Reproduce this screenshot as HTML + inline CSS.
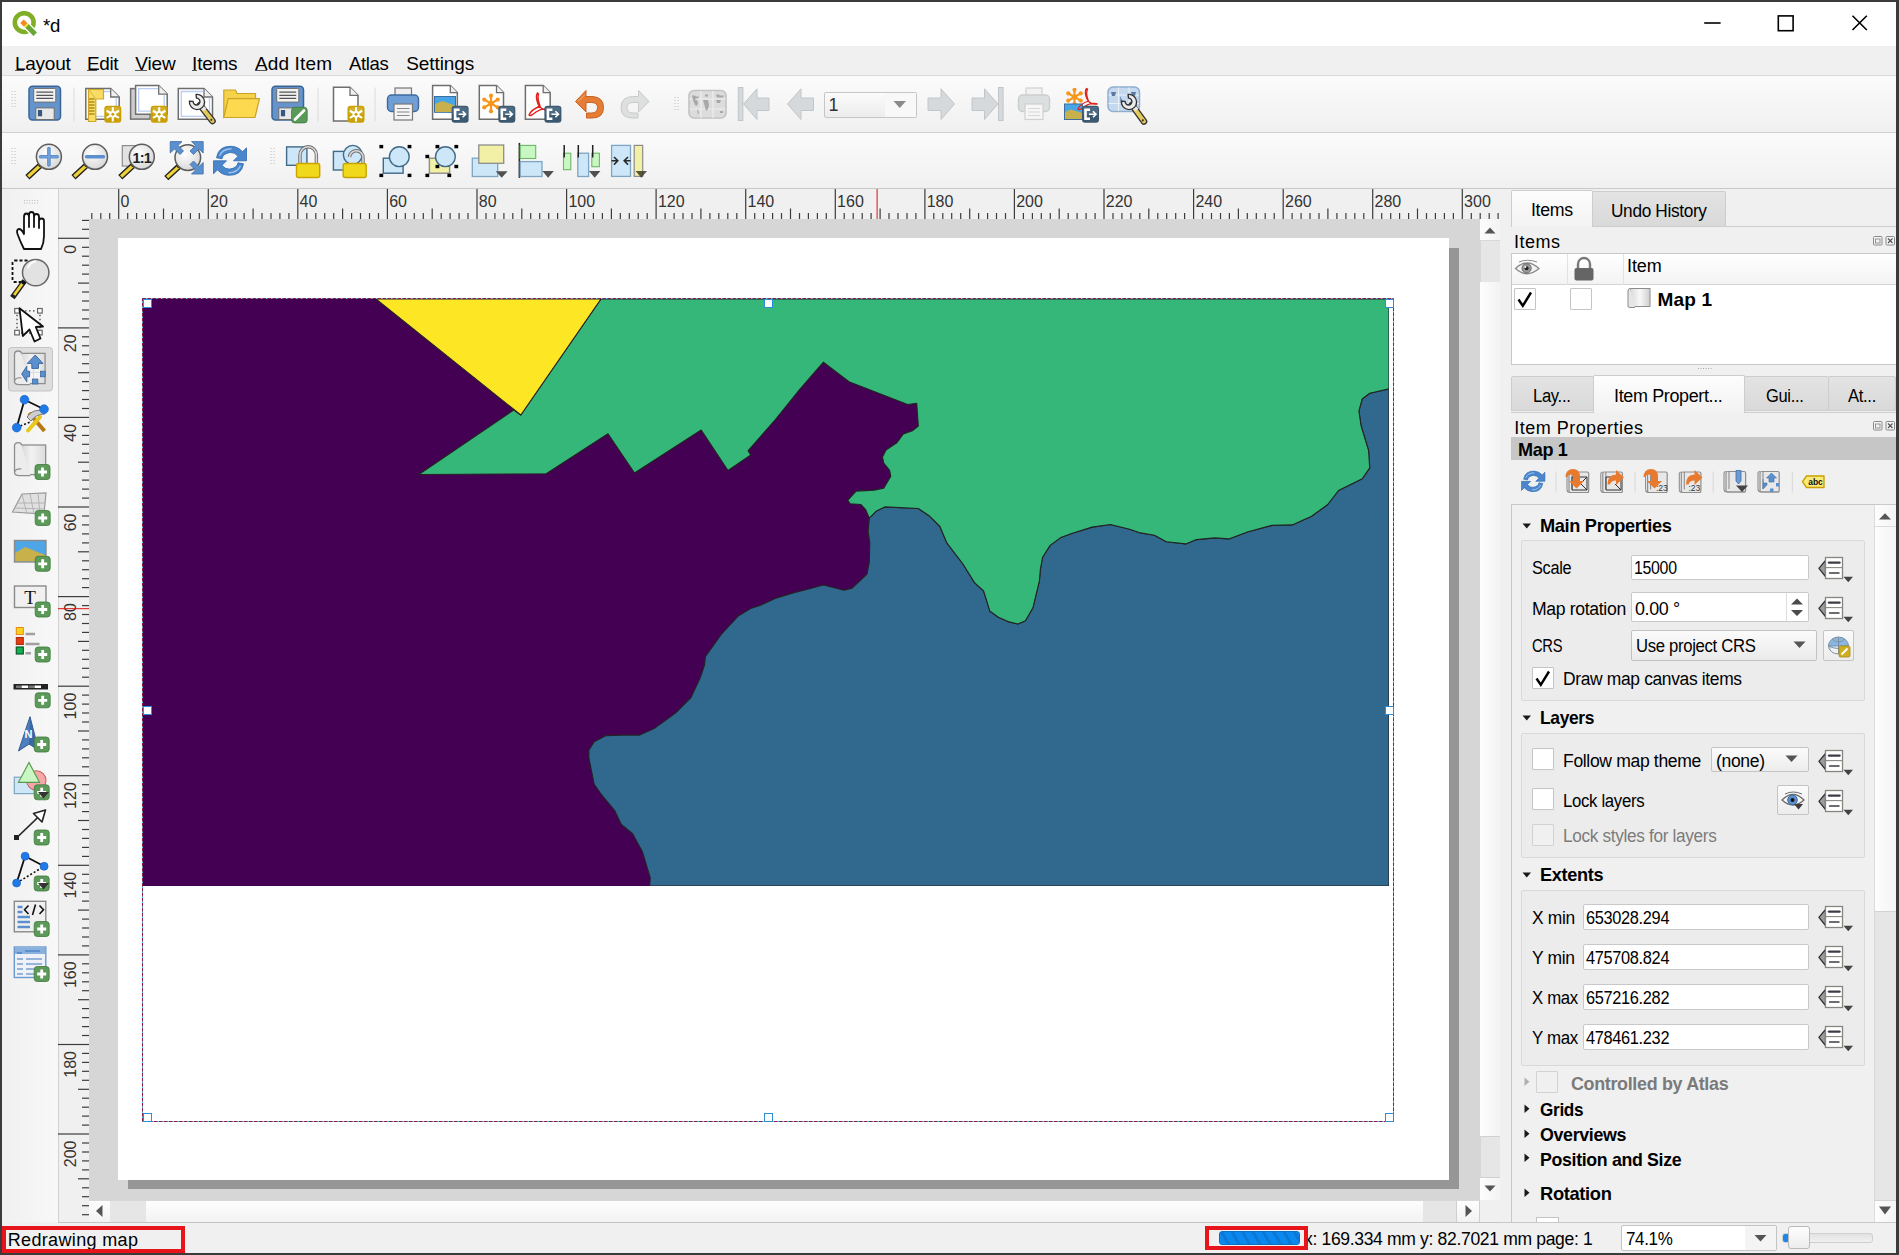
<!DOCTYPE html>
<html><head><meta charset="utf-8"><style>
html,body{margin:0;padding:0;}
body{width:1899px;height:1255px;position:relative;overflow:hidden;background:#f0f0f0;font-family:"Liberation Sans",sans-serif;}
body>div,body>svg{position:absolute;}
.t{white-space:pre;}
</style></head><body>
<div style="left:0px;top:0px;width:1899px;height:1255px;background:#f0f0f0"></div>
<div style="left:0px;top:0px;width:1899px;height:46px;background:#ffffff"></div>
<div style="left:0px;top:46px;width:1899px;height:29px;background:#f0f0f0"></div>
<div style="left:0px;top:75px;width:1899px;height:57px;background:linear-gradient(#fbfbfb,#f0f0f0);border-top:1px solid #dadada;box-sizing:border-box"></div>
<div style="left:0px;top:132px;width:1899px;height:57px;background:linear-gradient(#fbfbfb,#f0f0f0);border-top:1px solid #d0d0d0;box-sizing:border-box"></div>
<div style="left:0px;top:188px;width:1899px;height:1px;background:#c8c8c8"></div>
<div style="left:0px;top:189px;width:58px;height:1033px;background:linear-gradient(to right,#f0f0f0,#f8f8f8)"></div>
<div style="left:58px;top:189px;width:1px;height:1033px;background:#d2d2d2"></div>
<div style="left:59px;top:189px;width:1441px;height:30px;background:#f0f0f0"></div>
<div style="left:59px;top:219px;width:30px;height:1003px;background:#f0f0f0"></div>
<div style="left:89px;top:219px;width:1391px;height:981px;background:#d6d6d6"></div>
<div style="left:128px;top:248px;width:1331px;height:941px;background:#969696"></div>
<div style="left:118px;top:238px;width:1331px;height:942px;background:#ffffff"></div>
<div style="left:1480px;top:219px;width:20px;height:981px;background:linear-gradient(to right,#fdfdfd,#f3f3f3)"></div>
<div style="left:1480px;top:219px;width:20px;height:22px;background:linear-gradient(to right,#fdfdfd,#f3f3f3);border-bottom:1px solid #d8d8d8;box-sizing:border-box"></div>
<div style="left:1480px;top:241px;width:20px;height:41px;background:#e6e6e6;border-left:1px solid #d6d6d6;box-sizing:border-box"></div>
<div style="left:1480px;top:1136px;width:20px;height:42px;background:#e6e6e6;border-left:1px solid #d6d6d6;border-top:1px solid #d0d0d0;border-bottom:1px solid #d0d0d0;box-sizing:border-box"></div>
<svg style="left:1480px;top:219px;" width="20" height="22" viewBox="0 0 20 22"><path d="M4.5 14.5 L10 8.5 L15.5 14.5 Z" fill="#555"/></svg>
<svg style="left:1480px;top:1178px;" width="20" height="22" viewBox="0 0 20 22"><path d="M4.5 7.5 L10 13.5 L15.5 7.5 Z" fill="#555"/></svg>
<div style="left:89px;top:1200px;width:1391px;height:22px;background:linear-gradient(#fdfdfd,#f3f3f3);border-top:1px solid #d8d8d8;box-sizing:border-box"></div>
<div style="left:110px;top:1200px;width:36px;height:22px;background:#e6e6e6;border-top:1px solid #d6d6d6;box-sizing:border-box"></div>
<div style="left:1423px;top:1200px;width:34px;height:22px;background:#e6e6e6;border-top:1px solid #d6d6d6;box-sizing:border-box"></div>
<div style="left:1456px;top:1200px;width:24px;height:22px;background:linear-gradient(#fdfdfd,#f3f3f3);border-left:1px solid #d0d0d0;border-right:1px solid #d0d0d0;border-top:1px solid #d8d8d8;box-sizing:border-box"></div>
<svg style="left:89px;top:1200px;" width="21" height="22" viewBox="0 0 21 22"><path d="M13.5 5 L7 11 L13.5 17 Z" fill="#555"/></svg>
<svg style="left:1457px;top:1200px;" width="22" height="22" viewBox="0 0 22 22"><path d="M8.5 5 L15 11 L8.5 17 Z" fill="#555"/></svg>
<div style="left:1480px;top:1200px;width:20px;height:22px;background:#f0f0f0"></div>
<div style="left:58px;top:1222px;width:1443px;height:1px;background:#c4c4c4"></div>
<svg style="left:143px;top:299px;overflow:hidden" width="1246" height="587" viewBox="0 0 1246 587"><rect x="0" y="0" width="1246" height="587" fill="#440154"/>
<polygon points="726.3,219.1 733.5,211.9 741.9,207.9 775.3,209.5 786.1,216.7 796.9,227.5 804.0,244.2 819.6,264.5 831.5,283.6 840.6,292.0 847.0,312.3 855.4,318.3 865.0,322.6 875.0,325.0 882.4,321.7 889.9,308.8 896.4,281.9 897.4,270.0 899.6,258.2 907.1,246.4 917.9,238.4 928.6,234.5 949.1,228.1 967.4,225.5 986.7,230.2 997.5,233.9 1011.5,236.3 1023.3,242.7 1042.7,244.9 1053.5,240.6 1071.7,238.9 1085.7,239.9 1105.1,232.8 1128.8,226.4 1149.2,225.9 1168.6,217.3 1184.7,205.5 1195.5,191.5 1219.2,179.7 1226.7,168.9 1225.6,151.7 1218.1,127.0 1215.9,111.9 1219.2,100.0 1226.7,94.2 1246.0,89.9 1246.0,587.0 506.7,587.0 507.2,578.7 499.3,552.4 489.6,534.7 478.3,525.5 471.7,511.6 458.6,495.8 451.2,485.3 445.9,459.0 445.9,451.1 451.2,442.7 462.5,436.7 479.6,436.1 496.7,436.1 511.1,429.6 532.2,414.3 548.0,398.5 557.2,378.8 561.6,365.7 562.4,357.8 578.2,335.4 595.3,317.0 608.4,309.1 616.9,306.5 632.1,299.4 651.8,293.4 663.7,290.5 680.4,286.0 701.2,291.3 709.1,289.1 723.9,275.3 726.3,263.3 726.8,244.2 725.1,232.3 726.3,219.1" fill="#31688e" stroke="#232323" stroke-width="1.1" stroke-linejoin="round"/>
<polygon points="458.0,0.0 1246.0,0.0 1246.0,89.9 1226.7,94.2 1219.2,100.0 1215.9,111.9 1218.1,127.0 1225.6,151.7 1226.7,168.9 1219.2,179.7 1195.5,191.5 1184.7,205.5 1168.6,217.3 1149.2,225.9 1128.8,226.4 1105.1,232.8 1085.7,239.9 1071.7,238.9 1053.5,240.6 1042.7,244.9 1023.3,242.7 1011.5,236.3 997.5,233.9 986.7,230.2 967.4,225.5 949.1,228.1 928.6,234.5 917.9,238.4 907.1,246.4 899.6,258.2 897.4,270.0 896.4,281.9 889.9,308.8 882.4,321.7 875.0,325.0 865.0,322.6 855.4,318.3 847.0,312.3 840.6,292.0 831.5,283.6 819.6,264.5 804.0,244.2 796.9,227.5 786.1,216.7 775.3,209.5 741.9,207.9 733.5,211.9 726.3,219.1 722.7,210.7 718.0,205.5 707.2,204.8 704.8,201.2 713.2,192.1 731.1,191.1 740.7,189.2 747.8,177.3 746.6,171.3 740.7,164.1 739.5,158.1 743.0,151.0 753.8,143.8 760.3,135.0 769.4,131.8 775.3,127.0 773.7,104.4 764.6,105.5 706.0,82.8 680.4,63.2 657.0,90.0 632.0,121.0 605.0,151.8 607.8,156.0 585.0,171.5 558.2,131.0 491.5,174.0 465.0,134.8 403.2,174.8 275.8,175.5 370.8,111.0 377.8,116.0" fill="#35b779" stroke="#232323" stroke-width="1.1" stroke-linejoin="round"/>
<polygon points="233.0,0.0 458.0,0.0 377.8,116.0" fill="#fde725" stroke="#232323" stroke-width="1.1" stroke-linejoin="round"/></svg>
<svg style="left:142px;top:298px;" width="1253" height="825" viewBox="0 0 1253 825"><rect x="0.5" y="0.5" width="1251" height="823" fill="none" stroke="#5ec8f0" stroke-width="1"/>
<rect x="0.5" y="0.5" width="1251" height="823" fill="none" stroke="#8a1e46" stroke-width="1" stroke-dasharray="3.5,1.5"/></svg>
<div style="left:143px;top:299px;width:9px;height:9px;background:#fff;border:1px solid #2b8fd8;box-sizing:border-box"></div>
<div style="left:764px;top:299px;width:9px;height:9px;background:#fff;border:1px solid #2b8fd8;box-sizing:border-box"></div>
<div style="left:1385px;top:299px;width:9px;height:9px;background:#fff;border:1px solid #2b8fd8;box-sizing:border-box"></div>
<div style="left:143px;top:706px;width:9px;height:9px;background:#fff;border:1px solid #2b8fd8;box-sizing:border-box"></div>
<div style="left:1385px;top:706px;width:9px;height:9px;background:#fff;border:1px solid #2b8fd8;box-sizing:border-box"></div>
<div style="left:143px;top:1113px;width:9px;height:9px;background:#fff;border:1px solid #2b8fd8;box-sizing:border-box"></div>
<div style="left:764px;top:1113px;width:9px;height:9px;background:#fff;border:1px solid #2b8fd8;box-sizing:border-box"></div>
<div style="left:1385px;top:1113px;width:9px;height:9px;background:#fff;border:1px solid #2b8fd8;box-sizing:border-box"></div>
<svg style="left:89px;top:189px;font-family:'Liberation Sans',sans-serif" width="1411" height="30" viewBox="0 0 1411 30"><line x1="2.8" y1="24" x2="2.8" y2="30" stroke="#3c3c3c" stroke-width="1.2"/><line x1="11.8" y1="24" x2="11.8" y2="30" stroke="#3c3c3c" stroke-width="1.2"/><line x1="20.7" y1="24" x2="20.7" y2="30" stroke="#3c3c3c" stroke-width="1.2"/><line x1="29.7" y1="0" x2="29.7" y2="30" stroke="#3c3c3c" stroke-width="1.2"/><text x="31.5" y="18.2" font-size="16" fill="#333">0</text><line x1="38.7" y1="24" x2="38.7" y2="30" stroke="#3c3c3c" stroke-width="1.2"/><line x1="47.6" y1="24" x2="47.6" y2="30" stroke="#3c3c3c" stroke-width="1.2"/><line x1="56.6" y1="24" x2="56.6" y2="30" stroke="#3c3c3c" stroke-width="1.2"/><line x1="65.5" y1="24" x2="65.5" y2="30" stroke="#3c3c3c" stroke-width="1.2"/><line x1="74.5" y1="19.5" x2="74.5" y2="30" stroke="#3c3c3c" stroke-width="1.2"/><line x1="83.4" y1="24" x2="83.4" y2="30" stroke="#3c3c3c" stroke-width="1.2"/><line x1="92.4" y1="24" x2="92.4" y2="30" stroke="#3c3c3c" stroke-width="1.2"/><line x1="101.4" y1="24" x2="101.4" y2="30" stroke="#3c3c3c" stroke-width="1.2"/><line x1="110.3" y1="24" x2="110.3" y2="30" stroke="#3c3c3c" stroke-width="1.2"/><line x1="119.3" y1="0" x2="119.3" y2="30" stroke="#3c3c3c" stroke-width="1.2"/><text x="121.1" y="18.2" font-size="16" fill="#333">20</text><line x1="128.2" y1="24" x2="128.2" y2="30" stroke="#3c3c3c" stroke-width="1.2"/><line x1="137.2" y1="24" x2="137.2" y2="30" stroke="#3c3c3c" stroke-width="1.2"/><line x1="146.1" y1="24" x2="146.1" y2="30" stroke="#3c3c3c" stroke-width="1.2"/><line x1="155.1" y1="24" x2="155.1" y2="30" stroke="#3c3c3c" stroke-width="1.2"/><line x1="164.1" y1="19.5" x2="164.1" y2="30" stroke="#3c3c3c" stroke-width="1.2"/><line x1="173.0" y1="24" x2="173.0" y2="30" stroke="#3c3c3c" stroke-width="1.2"/><line x1="182.0" y1="24" x2="182.0" y2="30" stroke="#3c3c3c" stroke-width="1.2"/><line x1="190.9" y1="24" x2="190.9" y2="30" stroke="#3c3c3c" stroke-width="1.2"/><line x1="199.9" y1="24" x2="199.9" y2="30" stroke="#3c3c3c" stroke-width="1.2"/><line x1="208.8" y1="0" x2="208.8" y2="30" stroke="#3c3c3c" stroke-width="1.2"/><text x="210.6" y="18.2" font-size="16" fill="#333">40</text><line x1="217.8" y1="24" x2="217.8" y2="30" stroke="#3c3c3c" stroke-width="1.2"/><line x1="226.8" y1="24" x2="226.8" y2="30" stroke="#3c3c3c" stroke-width="1.2"/><line x1="235.7" y1="24" x2="235.7" y2="30" stroke="#3c3c3c" stroke-width="1.2"/><line x1="244.7" y1="24" x2="244.7" y2="30" stroke="#3c3c3c" stroke-width="1.2"/><line x1="253.6" y1="19.5" x2="253.6" y2="30" stroke="#3c3c3c" stroke-width="1.2"/><line x1="262.6" y1="24" x2="262.6" y2="30" stroke="#3c3c3c" stroke-width="1.2"/><line x1="271.5" y1="24" x2="271.5" y2="30" stroke="#3c3c3c" stroke-width="1.2"/><line x1="280.5" y1="24" x2="280.5" y2="30" stroke="#3c3c3c" stroke-width="1.2"/><line x1="289.5" y1="24" x2="289.5" y2="30" stroke="#3c3c3c" stroke-width="1.2"/><line x1="298.4" y1="0" x2="298.4" y2="30" stroke="#3c3c3c" stroke-width="1.2"/><text x="300.2" y="18.2" font-size="16" fill="#333">60</text><line x1="307.4" y1="24" x2="307.4" y2="30" stroke="#3c3c3c" stroke-width="1.2"/><line x1="316.3" y1="24" x2="316.3" y2="30" stroke="#3c3c3c" stroke-width="1.2"/><line x1="325.3" y1="24" x2="325.3" y2="30" stroke="#3c3c3c" stroke-width="1.2"/><line x1="334.3" y1="24" x2="334.3" y2="30" stroke="#3c3c3c" stroke-width="1.2"/><line x1="343.2" y1="19.5" x2="343.2" y2="30" stroke="#3c3c3c" stroke-width="1.2"/><line x1="352.2" y1="24" x2="352.2" y2="30" stroke="#3c3c3c" stroke-width="1.2"/><line x1="361.1" y1="24" x2="361.1" y2="30" stroke="#3c3c3c" stroke-width="1.2"/><line x1="370.1" y1="24" x2="370.1" y2="30" stroke="#3c3c3c" stroke-width="1.2"/><line x1="379.0" y1="24" x2="379.0" y2="30" stroke="#3c3c3c" stroke-width="1.2"/><line x1="388.0" y1="0" x2="388.0" y2="30" stroke="#3c3c3c" stroke-width="1.2"/><text x="389.8" y="18.2" font-size="16" fill="#333">80</text><line x1="397.0" y1="24" x2="397.0" y2="30" stroke="#3c3c3c" stroke-width="1.2"/><line x1="405.9" y1="24" x2="405.9" y2="30" stroke="#3c3c3c" stroke-width="1.2"/><line x1="414.9" y1="24" x2="414.9" y2="30" stroke="#3c3c3c" stroke-width="1.2"/><line x1="423.8" y1="24" x2="423.8" y2="30" stroke="#3c3c3c" stroke-width="1.2"/><line x1="432.8" y1="19.5" x2="432.8" y2="30" stroke="#3c3c3c" stroke-width="1.2"/><line x1="441.7" y1="24" x2="441.7" y2="30" stroke="#3c3c3c" stroke-width="1.2"/><line x1="450.7" y1="24" x2="450.7" y2="30" stroke="#3c3c3c" stroke-width="1.2"/><line x1="459.7" y1="24" x2="459.7" y2="30" stroke="#3c3c3c" stroke-width="1.2"/><line x1="468.6" y1="24" x2="468.6" y2="30" stroke="#3c3c3c" stroke-width="1.2"/><line x1="477.6" y1="0" x2="477.6" y2="30" stroke="#3c3c3c" stroke-width="1.2"/><text x="479.4" y="18.2" font-size="16" fill="#333">100</text><line x1="486.5" y1="24" x2="486.5" y2="30" stroke="#3c3c3c" stroke-width="1.2"/><line x1="495.5" y1="24" x2="495.5" y2="30" stroke="#3c3c3c" stroke-width="1.2"/><line x1="504.4" y1="24" x2="504.4" y2="30" stroke="#3c3c3c" stroke-width="1.2"/><line x1="513.4" y1="24" x2="513.4" y2="30" stroke="#3c3c3c" stroke-width="1.2"/><line x1="522.4" y1="19.5" x2="522.4" y2="30" stroke="#3c3c3c" stroke-width="1.2"/><line x1="531.3" y1="24" x2="531.3" y2="30" stroke="#3c3c3c" stroke-width="1.2"/><line x1="540.3" y1="24" x2="540.3" y2="30" stroke="#3c3c3c" stroke-width="1.2"/><line x1="549.2" y1="24" x2="549.2" y2="30" stroke="#3c3c3c" stroke-width="1.2"/><line x1="558.2" y1="24" x2="558.2" y2="30" stroke="#3c3c3c" stroke-width="1.2"/><line x1="567.1" y1="0" x2="567.1" y2="30" stroke="#3c3c3c" stroke-width="1.2"/><text x="568.9" y="18.2" font-size="16" fill="#333">120</text><line x1="576.1" y1="24" x2="576.1" y2="30" stroke="#3c3c3c" stroke-width="1.2"/><line x1="585.1" y1="24" x2="585.1" y2="30" stroke="#3c3c3c" stroke-width="1.2"/><line x1="594.0" y1="24" x2="594.0" y2="30" stroke="#3c3c3c" stroke-width="1.2"/><line x1="603.0" y1="24" x2="603.0" y2="30" stroke="#3c3c3c" stroke-width="1.2"/><line x1="611.9" y1="19.5" x2="611.9" y2="30" stroke="#3c3c3c" stroke-width="1.2"/><line x1="620.9" y1="24" x2="620.9" y2="30" stroke="#3c3c3c" stroke-width="1.2"/><line x1="629.8" y1="24" x2="629.8" y2="30" stroke="#3c3c3c" stroke-width="1.2"/><line x1="638.8" y1="24" x2="638.8" y2="30" stroke="#3c3c3c" stroke-width="1.2"/><line x1="647.8" y1="24" x2="647.8" y2="30" stroke="#3c3c3c" stroke-width="1.2"/><line x1="656.7" y1="0" x2="656.7" y2="30" stroke="#3c3c3c" stroke-width="1.2"/><text x="658.5" y="18.2" font-size="16" fill="#333">140</text><line x1="665.7" y1="24" x2="665.7" y2="30" stroke="#3c3c3c" stroke-width="1.2"/><line x1="674.6" y1="24" x2="674.6" y2="30" stroke="#3c3c3c" stroke-width="1.2"/><line x1="683.6" y1="24" x2="683.6" y2="30" stroke="#3c3c3c" stroke-width="1.2"/><line x1="692.5" y1="24" x2="692.5" y2="30" stroke="#3c3c3c" stroke-width="1.2"/><line x1="701.5" y1="19.5" x2="701.5" y2="30" stroke="#3c3c3c" stroke-width="1.2"/><line x1="710.5" y1="24" x2="710.5" y2="30" stroke="#3c3c3c" stroke-width="1.2"/><line x1="719.4" y1="24" x2="719.4" y2="30" stroke="#3c3c3c" stroke-width="1.2"/><line x1="728.4" y1="24" x2="728.4" y2="30" stroke="#3c3c3c" stroke-width="1.2"/><line x1="737.3" y1="24" x2="737.3" y2="30" stroke="#3c3c3c" stroke-width="1.2"/><line x1="746.3" y1="0" x2="746.3" y2="30" stroke="#3c3c3c" stroke-width="1.2"/><text x="748.1" y="18.2" font-size="16" fill="#333">160</text><line x1="755.2" y1="24" x2="755.2" y2="30" stroke="#3c3c3c" stroke-width="1.2"/><line x1="764.2" y1="24" x2="764.2" y2="30" stroke="#3c3c3c" stroke-width="1.2"/><line x1="773.2" y1="24" x2="773.2" y2="30" stroke="#3c3c3c" stroke-width="1.2"/><line x1="782.1" y1="24" x2="782.1" y2="30" stroke="#3c3c3c" stroke-width="1.2"/><line x1="791.1" y1="19.5" x2="791.1" y2="30" stroke="#3c3c3c" stroke-width="1.2"/><line x1="800.0" y1="24" x2="800.0" y2="30" stroke="#3c3c3c" stroke-width="1.2"/><line x1="809.0" y1="24" x2="809.0" y2="30" stroke="#3c3c3c" stroke-width="1.2"/><line x1="818.0" y1="24" x2="818.0" y2="30" stroke="#3c3c3c" stroke-width="1.2"/><line x1="826.9" y1="24" x2="826.9" y2="30" stroke="#3c3c3c" stroke-width="1.2"/><line x1="835.9" y1="0" x2="835.9" y2="30" stroke="#3c3c3c" stroke-width="1.2"/><text x="837.7" y="18.2" font-size="16" fill="#333">180</text><line x1="844.8" y1="24" x2="844.8" y2="30" stroke="#3c3c3c" stroke-width="1.2"/><line x1="853.8" y1="24" x2="853.8" y2="30" stroke="#3c3c3c" stroke-width="1.2"/><line x1="862.7" y1="24" x2="862.7" y2="30" stroke="#3c3c3c" stroke-width="1.2"/><line x1="871.7" y1="24" x2="871.7" y2="30" stroke="#3c3c3c" stroke-width="1.2"/><line x1="880.7" y1="19.5" x2="880.7" y2="30" stroke="#3c3c3c" stroke-width="1.2"/><line x1="889.6" y1="24" x2="889.6" y2="30" stroke="#3c3c3c" stroke-width="1.2"/><line x1="898.6" y1="24" x2="898.6" y2="30" stroke="#3c3c3c" stroke-width="1.2"/><line x1="907.5" y1="24" x2="907.5" y2="30" stroke="#3c3c3c" stroke-width="1.2"/><line x1="916.5" y1="24" x2="916.5" y2="30" stroke="#3c3c3c" stroke-width="1.2"/><line x1="925.4" y1="0" x2="925.4" y2="30" stroke="#3c3c3c" stroke-width="1.2"/><text x="927.2" y="18.2" font-size="16" fill="#333">200</text><line x1="934.4" y1="24" x2="934.4" y2="30" stroke="#3c3c3c" stroke-width="1.2"/><line x1="943.4" y1="24" x2="943.4" y2="30" stroke="#3c3c3c" stroke-width="1.2"/><line x1="952.3" y1="24" x2="952.3" y2="30" stroke="#3c3c3c" stroke-width="1.2"/><line x1="961.3" y1="24" x2="961.3" y2="30" stroke="#3c3c3c" stroke-width="1.2"/><line x1="970.2" y1="19.5" x2="970.2" y2="30" stroke="#3c3c3c" stroke-width="1.2"/><line x1="979.2" y1="24" x2="979.2" y2="30" stroke="#3c3c3c" stroke-width="1.2"/><line x1="988.1" y1="24" x2="988.1" y2="30" stroke="#3c3c3c" stroke-width="1.2"/><line x1="997.1" y1="24" x2="997.1" y2="30" stroke="#3c3c3c" stroke-width="1.2"/><line x1="1006.1" y1="24" x2="1006.1" y2="30" stroke="#3c3c3c" stroke-width="1.2"/><line x1="1015.0" y1="0" x2="1015.0" y2="30" stroke="#3c3c3c" stroke-width="1.2"/><text x="1016.8" y="18.2" font-size="16" fill="#333">220</text><line x1="1024.0" y1="24" x2="1024.0" y2="30" stroke="#3c3c3c" stroke-width="1.2"/><line x1="1032.9" y1="24" x2="1032.9" y2="30" stroke="#3c3c3c" stroke-width="1.2"/><line x1="1041.9" y1="24" x2="1041.9" y2="30" stroke="#3c3c3c" stroke-width="1.2"/><line x1="1050.8" y1="24" x2="1050.8" y2="30" stroke="#3c3c3c" stroke-width="1.2"/><line x1="1059.8" y1="19.5" x2="1059.8" y2="30" stroke="#3c3c3c" stroke-width="1.2"/><line x1="1068.8" y1="24" x2="1068.8" y2="30" stroke="#3c3c3c" stroke-width="1.2"/><line x1="1077.7" y1="24" x2="1077.7" y2="30" stroke="#3c3c3c" stroke-width="1.2"/><line x1="1086.7" y1="24" x2="1086.7" y2="30" stroke="#3c3c3c" stroke-width="1.2"/><line x1="1095.6" y1="24" x2="1095.6" y2="30" stroke="#3c3c3c" stroke-width="1.2"/><line x1="1104.6" y1="0" x2="1104.6" y2="30" stroke="#3c3c3c" stroke-width="1.2"/><text x="1106.4" y="18.2" font-size="16" fill="#333">240</text><line x1="1113.5" y1="24" x2="1113.5" y2="30" stroke="#3c3c3c" stroke-width="1.2"/><line x1="1122.5" y1="24" x2="1122.5" y2="30" stroke="#3c3c3c" stroke-width="1.2"/><line x1="1131.5" y1="24" x2="1131.5" y2="30" stroke="#3c3c3c" stroke-width="1.2"/><line x1="1140.4" y1="24" x2="1140.4" y2="30" stroke="#3c3c3c" stroke-width="1.2"/><line x1="1149.4" y1="19.5" x2="1149.4" y2="30" stroke="#3c3c3c" stroke-width="1.2"/><line x1="1158.3" y1="24" x2="1158.3" y2="30" stroke="#3c3c3c" stroke-width="1.2"/><line x1="1167.3" y1="24" x2="1167.3" y2="30" stroke="#3c3c3c" stroke-width="1.2"/><line x1="1176.2" y1="24" x2="1176.2" y2="30" stroke="#3c3c3c" stroke-width="1.2"/><line x1="1185.2" y1="24" x2="1185.2" y2="30" stroke="#3c3c3c" stroke-width="1.2"/><line x1="1194.2" y1="0" x2="1194.2" y2="30" stroke="#3c3c3c" stroke-width="1.2"/><text x="1196.0" y="18.2" font-size="16" fill="#333">260</text><line x1="1203.1" y1="24" x2="1203.1" y2="30" stroke="#3c3c3c" stroke-width="1.2"/><line x1="1212.1" y1="24" x2="1212.1" y2="30" stroke="#3c3c3c" stroke-width="1.2"/><line x1="1221.0" y1="24" x2="1221.0" y2="30" stroke="#3c3c3c" stroke-width="1.2"/><line x1="1230.0" y1="24" x2="1230.0" y2="30" stroke="#3c3c3c" stroke-width="1.2"/><line x1="1238.9" y1="19.5" x2="1238.9" y2="30" stroke="#3c3c3c" stroke-width="1.2"/><line x1="1247.9" y1="24" x2="1247.9" y2="30" stroke="#3c3c3c" stroke-width="1.2"/><line x1="1256.9" y1="24" x2="1256.9" y2="30" stroke="#3c3c3c" stroke-width="1.2"/><line x1="1265.8" y1="24" x2="1265.8" y2="30" stroke="#3c3c3c" stroke-width="1.2"/><line x1="1274.8" y1="24" x2="1274.8" y2="30" stroke="#3c3c3c" stroke-width="1.2"/><line x1="1283.7" y1="0" x2="1283.7" y2="30" stroke="#3c3c3c" stroke-width="1.2"/><text x="1285.5" y="18.2" font-size="16" fill="#333">280</text><line x1="1292.7" y1="24" x2="1292.7" y2="30" stroke="#3c3c3c" stroke-width="1.2"/><line x1="1301.7" y1="24" x2="1301.7" y2="30" stroke="#3c3c3c" stroke-width="1.2"/><line x1="1310.6" y1="24" x2="1310.6" y2="30" stroke="#3c3c3c" stroke-width="1.2"/><line x1="1319.6" y1="24" x2="1319.6" y2="30" stroke="#3c3c3c" stroke-width="1.2"/><line x1="1328.5" y1="19.5" x2="1328.5" y2="30" stroke="#3c3c3c" stroke-width="1.2"/><line x1="1337.5" y1="24" x2="1337.5" y2="30" stroke="#3c3c3c" stroke-width="1.2"/><line x1="1346.4" y1="24" x2="1346.4" y2="30" stroke="#3c3c3c" stroke-width="1.2"/><line x1="1355.4" y1="24" x2="1355.4" y2="30" stroke="#3c3c3c" stroke-width="1.2"/><line x1="1364.4" y1="24" x2="1364.4" y2="30" stroke="#3c3c3c" stroke-width="1.2"/><line x1="1373.3" y1="0" x2="1373.3" y2="30" stroke="#3c3c3c" stroke-width="1.2"/><text x="1375.1" y="18.2" font-size="16" fill="#333">300</text><line x1="1382.3" y1="24" x2="1382.3" y2="30" stroke="#3c3c3c" stroke-width="1.2"/><line x1="1391.2" y1="24" x2="1391.2" y2="30" stroke="#3c3c3c" stroke-width="1.2"/><line x1="1400.2" y1="24" x2="1400.2" y2="30" stroke="#3c3c3c" stroke-width="1.2"/><line x1="1409.1" y1="24" x2="1409.1" y2="30" stroke="#3c3c3c" stroke-width="1.2"/><line x1="788.1" y1="0" x2="788.1" y2="30" stroke="#e01010" stroke-width="1"/></svg>
<svg style="left:58px;top:219px;font-family:'Liberation Sans',sans-serif" width="31" height="1003" viewBox="0 0 31 1003"><line x1="24" y1="1.4" x2="31" y2="1.4" stroke="#3c3c3c" stroke-width="1.2"/><line x1="24" y1="10.3" x2="31" y2="10.3" stroke="#3c3c3c" stroke-width="1.2"/><line x1="0" y1="19.3" x2="31" y2="19.3" stroke="#3c3c3c" stroke-width="1.2"/><text transform="translate(17.8,25.8) rotate(-90)" text-anchor="end" font-size="16" fill="#333">0</text><line x1="24" y1="28.3" x2="31" y2="28.3" stroke="#3c3c3c" stroke-width="1.2"/><line x1="24" y1="37.2" x2="31" y2="37.2" stroke="#3c3c3c" stroke-width="1.2"/><line x1="24" y1="46.2" x2="31" y2="46.2" stroke="#3c3c3c" stroke-width="1.2"/><line x1="24" y1="55.1" x2="31" y2="55.1" stroke="#3c3c3c" stroke-width="1.2"/><line x1="20" y1="64.1" x2="31" y2="64.1" stroke="#3c3c3c" stroke-width="1.2"/><line x1="24" y1="73.0" x2="31" y2="73.0" stroke="#3c3c3c" stroke-width="1.2"/><line x1="24" y1="82.0" x2="31" y2="82.0" stroke="#3c3c3c" stroke-width="1.2"/><line x1="24" y1="91.0" x2="31" y2="91.0" stroke="#3c3c3c" stroke-width="1.2"/><line x1="24" y1="99.9" x2="31" y2="99.9" stroke="#3c3c3c" stroke-width="1.2"/><line x1="0" y1="108.9" x2="31" y2="108.9" stroke="#3c3c3c" stroke-width="1.2"/><text transform="translate(17.8,115.4) rotate(-90)" text-anchor="end" font-size="16" fill="#333">20</text><line x1="24" y1="117.8" x2="31" y2="117.8" stroke="#3c3c3c" stroke-width="1.2"/><line x1="24" y1="126.8" x2="31" y2="126.8" stroke="#3c3c3c" stroke-width="1.2"/><line x1="24" y1="135.7" x2="31" y2="135.7" stroke="#3c3c3c" stroke-width="1.2"/><line x1="24" y1="144.7" x2="31" y2="144.7" stroke="#3c3c3c" stroke-width="1.2"/><line x1="20" y1="153.7" x2="31" y2="153.7" stroke="#3c3c3c" stroke-width="1.2"/><line x1="24" y1="162.6" x2="31" y2="162.6" stroke="#3c3c3c" stroke-width="1.2"/><line x1="24" y1="171.6" x2="31" y2="171.6" stroke="#3c3c3c" stroke-width="1.2"/><line x1="24" y1="180.5" x2="31" y2="180.5" stroke="#3c3c3c" stroke-width="1.2"/><line x1="24" y1="189.5" x2="31" y2="189.5" stroke="#3c3c3c" stroke-width="1.2"/><line x1="0" y1="198.4" x2="31" y2="198.4" stroke="#3c3c3c" stroke-width="1.2"/><text transform="translate(17.8,204.9) rotate(-90)" text-anchor="end" font-size="16" fill="#333">40</text><line x1="24" y1="207.4" x2="31" y2="207.4" stroke="#3c3c3c" stroke-width="1.2"/><line x1="24" y1="216.4" x2="31" y2="216.4" stroke="#3c3c3c" stroke-width="1.2"/><line x1="24" y1="225.3" x2="31" y2="225.3" stroke="#3c3c3c" stroke-width="1.2"/><line x1="24" y1="234.3" x2="31" y2="234.3" stroke="#3c3c3c" stroke-width="1.2"/><line x1="20" y1="243.2" x2="31" y2="243.2" stroke="#3c3c3c" stroke-width="1.2"/><line x1="24" y1="252.2" x2="31" y2="252.2" stroke="#3c3c3c" stroke-width="1.2"/><line x1="24" y1="261.1" x2="31" y2="261.1" stroke="#3c3c3c" stroke-width="1.2"/><line x1="24" y1="270.1" x2="31" y2="270.1" stroke="#3c3c3c" stroke-width="1.2"/><line x1="24" y1="279.1" x2="31" y2="279.1" stroke="#3c3c3c" stroke-width="1.2"/><line x1="0" y1="288.0" x2="31" y2="288.0" stroke="#3c3c3c" stroke-width="1.2"/><text transform="translate(17.8,294.5) rotate(-90)" text-anchor="end" font-size="16" fill="#333">60</text><line x1="24" y1="297.0" x2="31" y2="297.0" stroke="#3c3c3c" stroke-width="1.2"/><line x1="24" y1="305.9" x2="31" y2="305.9" stroke="#3c3c3c" stroke-width="1.2"/><line x1="24" y1="314.9" x2="31" y2="314.9" stroke="#3c3c3c" stroke-width="1.2"/><line x1="24" y1="323.9" x2="31" y2="323.9" stroke="#3c3c3c" stroke-width="1.2"/><line x1="20" y1="332.8" x2="31" y2="332.8" stroke="#3c3c3c" stroke-width="1.2"/><line x1="24" y1="341.8" x2="31" y2="341.8" stroke="#3c3c3c" stroke-width="1.2"/><line x1="24" y1="350.7" x2="31" y2="350.7" stroke="#3c3c3c" stroke-width="1.2"/><line x1="24" y1="359.7" x2="31" y2="359.7" stroke="#3c3c3c" stroke-width="1.2"/><line x1="24" y1="368.6" x2="31" y2="368.6" stroke="#3c3c3c" stroke-width="1.2"/><line x1="0" y1="377.6" x2="31" y2="377.6" stroke="#3c3c3c" stroke-width="1.2"/><text transform="translate(17.8,384.1) rotate(-90)" text-anchor="end" font-size="16" fill="#333">80</text><line x1="24" y1="386.6" x2="31" y2="386.6" stroke="#3c3c3c" stroke-width="1.2"/><line x1="24" y1="395.5" x2="31" y2="395.5" stroke="#3c3c3c" stroke-width="1.2"/><line x1="24" y1="404.5" x2="31" y2="404.5" stroke="#3c3c3c" stroke-width="1.2"/><line x1="24" y1="413.4" x2="31" y2="413.4" stroke="#3c3c3c" stroke-width="1.2"/><line x1="20" y1="422.4" x2="31" y2="422.4" stroke="#3c3c3c" stroke-width="1.2"/><line x1="24" y1="431.3" x2="31" y2="431.3" stroke="#3c3c3c" stroke-width="1.2"/><line x1="24" y1="440.3" x2="31" y2="440.3" stroke="#3c3c3c" stroke-width="1.2"/><line x1="24" y1="449.3" x2="31" y2="449.3" stroke="#3c3c3c" stroke-width="1.2"/><line x1="24" y1="458.2" x2="31" y2="458.2" stroke="#3c3c3c" stroke-width="1.2"/><line x1="0" y1="467.2" x2="31" y2="467.2" stroke="#3c3c3c" stroke-width="1.2"/><text transform="translate(17.8,473.7) rotate(-90)" text-anchor="end" font-size="16" fill="#333">100</text><line x1="24" y1="476.1" x2="31" y2="476.1" stroke="#3c3c3c" stroke-width="1.2"/><line x1="24" y1="485.1" x2="31" y2="485.1" stroke="#3c3c3c" stroke-width="1.2"/><line x1="24" y1="494.0" x2="31" y2="494.0" stroke="#3c3c3c" stroke-width="1.2"/><line x1="24" y1="503.0" x2="31" y2="503.0" stroke="#3c3c3c" stroke-width="1.2"/><line x1="20" y1="512.0" x2="31" y2="512.0" stroke="#3c3c3c" stroke-width="1.2"/><line x1="24" y1="520.9" x2="31" y2="520.9" stroke="#3c3c3c" stroke-width="1.2"/><line x1="24" y1="529.9" x2="31" y2="529.9" stroke="#3c3c3c" stroke-width="1.2"/><line x1="24" y1="538.8" x2="31" y2="538.8" stroke="#3c3c3c" stroke-width="1.2"/><line x1="24" y1="547.8" x2="31" y2="547.8" stroke="#3c3c3c" stroke-width="1.2"/><line x1="0" y1="556.7" x2="31" y2="556.7" stroke="#3c3c3c" stroke-width="1.2"/><text transform="translate(17.8,563.2) rotate(-90)" text-anchor="end" font-size="16" fill="#333">120</text><line x1="24" y1="565.7" x2="31" y2="565.7" stroke="#3c3c3c" stroke-width="1.2"/><line x1="24" y1="574.7" x2="31" y2="574.7" stroke="#3c3c3c" stroke-width="1.2"/><line x1="24" y1="583.6" x2="31" y2="583.6" stroke="#3c3c3c" stroke-width="1.2"/><line x1="24" y1="592.6" x2="31" y2="592.6" stroke="#3c3c3c" stroke-width="1.2"/><line x1="20" y1="601.5" x2="31" y2="601.5" stroke="#3c3c3c" stroke-width="1.2"/><line x1="24" y1="610.5" x2="31" y2="610.5" stroke="#3c3c3c" stroke-width="1.2"/><line x1="24" y1="619.4" x2="31" y2="619.4" stroke="#3c3c3c" stroke-width="1.2"/><line x1="24" y1="628.4" x2="31" y2="628.4" stroke="#3c3c3c" stroke-width="1.2"/><line x1="24" y1="637.4" x2="31" y2="637.4" stroke="#3c3c3c" stroke-width="1.2"/><line x1="0" y1="646.3" x2="31" y2="646.3" stroke="#3c3c3c" stroke-width="1.2"/><text transform="translate(17.8,652.8) rotate(-90)" text-anchor="end" font-size="16" fill="#333">140</text><line x1="24" y1="655.3" x2="31" y2="655.3" stroke="#3c3c3c" stroke-width="1.2"/><line x1="24" y1="664.2" x2="31" y2="664.2" stroke="#3c3c3c" stroke-width="1.2"/><line x1="24" y1="673.2" x2="31" y2="673.2" stroke="#3c3c3c" stroke-width="1.2"/><line x1="24" y1="682.1" x2="31" y2="682.1" stroke="#3c3c3c" stroke-width="1.2"/><line x1="20" y1="691.1" x2="31" y2="691.1" stroke="#3c3c3c" stroke-width="1.2"/><line x1="24" y1="700.1" x2="31" y2="700.1" stroke="#3c3c3c" stroke-width="1.2"/><line x1="24" y1="709.0" x2="31" y2="709.0" stroke="#3c3c3c" stroke-width="1.2"/><line x1="24" y1="718.0" x2="31" y2="718.0" stroke="#3c3c3c" stroke-width="1.2"/><line x1="24" y1="726.9" x2="31" y2="726.9" stroke="#3c3c3c" stroke-width="1.2"/><line x1="0" y1="735.9" x2="31" y2="735.9" stroke="#3c3c3c" stroke-width="1.2"/><text transform="translate(17.8,742.4) rotate(-90)" text-anchor="end" font-size="16" fill="#333">160</text><line x1="24" y1="744.8" x2="31" y2="744.8" stroke="#3c3c3c" stroke-width="1.2"/><line x1="24" y1="753.8" x2="31" y2="753.8" stroke="#3c3c3c" stroke-width="1.2"/><line x1="24" y1="762.8" x2="31" y2="762.8" stroke="#3c3c3c" stroke-width="1.2"/><line x1="24" y1="771.7" x2="31" y2="771.7" stroke="#3c3c3c" stroke-width="1.2"/><line x1="20" y1="780.7" x2="31" y2="780.7" stroke="#3c3c3c" stroke-width="1.2"/><line x1="24" y1="789.6" x2="31" y2="789.6" stroke="#3c3c3c" stroke-width="1.2"/><line x1="24" y1="798.6" x2="31" y2="798.6" stroke="#3c3c3c" stroke-width="1.2"/><line x1="24" y1="807.6" x2="31" y2="807.6" stroke="#3c3c3c" stroke-width="1.2"/><line x1="24" y1="816.5" x2="31" y2="816.5" stroke="#3c3c3c" stroke-width="1.2"/><line x1="0" y1="825.5" x2="31" y2="825.5" stroke="#3c3c3c" stroke-width="1.2"/><text transform="translate(17.8,832.0) rotate(-90)" text-anchor="end" font-size="16" fill="#333">180</text><line x1="24" y1="834.4" x2="31" y2="834.4" stroke="#3c3c3c" stroke-width="1.2"/><line x1="24" y1="843.4" x2="31" y2="843.4" stroke="#3c3c3c" stroke-width="1.2"/><line x1="24" y1="852.3" x2="31" y2="852.3" stroke="#3c3c3c" stroke-width="1.2"/><line x1="24" y1="861.3" x2="31" y2="861.3" stroke="#3c3c3c" stroke-width="1.2"/><line x1="20" y1="870.3" x2="31" y2="870.3" stroke="#3c3c3c" stroke-width="1.2"/><line x1="24" y1="879.2" x2="31" y2="879.2" stroke="#3c3c3c" stroke-width="1.2"/><line x1="24" y1="888.2" x2="31" y2="888.2" stroke="#3c3c3c" stroke-width="1.2"/><line x1="24" y1="897.1" x2="31" y2="897.1" stroke="#3c3c3c" stroke-width="1.2"/><line x1="24" y1="906.1" x2="31" y2="906.1" stroke="#3c3c3c" stroke-width="1.2"/><line x1="0" y1="915.0" x2="31" y2="915.0" stroke="#3c3c3c" stroke-width="1.2"/><text transform="translate(17.8,921.5) rotate(-90)" text-anchor="end" font-size="16" fill="#333">200</text><line x1="24" y1="924.0" x2="31" y2="924.0" stroke="#3c3c3c" stroke-width="1.2"/><line x1="24" y1="933.0" x2="31" y2="933.0" stroke="#3c3c3c" stroke-width="1.2"/><line x1="24" y1="941.9" x2="31" y2="941.9" stroke="#3c3c3c" stroke-width="1.2"/><line x1="24" y1="950.9" x2="31" y2="950.9" stroke="#3c3c3c" stroke-width="1.2"/><line x1="20" y1="959.8" x2="31" y2="959.8" stroke="#3c3c3c" stroke-width="1.2"/><line x1="24" y1="968.8" x2="31" y2="968.8" stroke="#3c3c3c" stroke-width="1.2"/><line x1="24" y1="977.7" x2="31" y2="977.7" stroke="#3c3c3c" stroke-width="1.2"/><line x1="24" y1="986.7" x2="31" y2="986.7" stroke="#3c3c3c" stroke-width="1.2"/><line x1="24" y1="995.7" x2="31" y2="995.7" stroke="#3c3c3c" stroke-width="1.2"/><line x1="0" y1="389.7" x2="31" y2="389.7" stroke="#e01010" stroke-width="1"/></svg>
<svg style="left:12px;top:11px;" width="26" height="26" viewBox="0 0 26 26"><circle cx="12.2" cy="11.6" r="9.4" fill="none" stroke="#80ae27" stroke-width="4.6"/>
<path d="M12.5 12.5 L24 24" stroke="#ffffff" stroke-width="7.5"/>
<path d="M14.6 14.6 L23.2 23.2" stroke="#6aa638" stroke-width="5"/>
<path d="M10 10.2 L14 14.2" stroke="#f18a1e" stroke-width="5"/>
<path d="M13.6 13.8 L15 15.2" stroke="#f3e23a" stroke-width="5"/></svg>
<div class="t" style="left:42.50px;top:15.52px;font-size:19px;line-height:19px;color:#000;letter-spacing:-0.350px;transform:scaleX(0.9770);transform-origin:0.00px 0;">*d</div>
<svg style="left:1700px;top:10px;" width="180" height="28" viewBox="0 0 180 28"><path d="M4.2 13 H20.6" stroke="#000" stroke-width="1.6"/>
<rect x="78.3" y="5.9" width="14.8" height="14.8" fill="none" stroke="#000" stroke-width="1.6"/>
<path d="M152.5 5.8 L166.8 20 M166.8 5.8 L152.5 20" stroke="#000" stroke-width="1.6"/></svg>
<div class="t" style="left:14.90px;top:53.52px;font-size:19px;line-height:19px;color:#000;letter-spacing:-0.239px;">Layout</div>
<div class="t" style="left:87.20px;top:53.52px;font-size:19px;line-height:19px;color:#000;letter-spacing:-0.350px;transform:scaleX(0.9961);transform-origin:0.00px 0;">Edit</div>
<div class="t" style="left:135.20px;top:53.52px;font-size:19px;line-height:19px;color:#000;letter-spacing:-0.117px;">View</div>
<div class="t" style="left:192.10px;top:53.52px;font-size:19px;line-height:19px;color:#000;letter-spacing:-0.239px;">Items</div>
<div class="t" style="left:254.90px;top:53.52px;font-size:19px;line-height:19px;color:#000;letter-spacing:0.157px;">Add Item</div>
<div class="t" style="left:349.30px;top:53.52px;font-size:19px;line-height:19px;color:#000;letter-spacing:-0.350px;transform:scaleX(0.9737);transform-origin:0.00px 0;">Atlas</div>
<div class="t" style="left:406.20px;top:53.52px;font-size:19px;line-height:19px;color:#000;letter-spacing:-0.069px;">Settings</div>
<div style="left:14.9px;top:69.5px;width:9.5px;height:1px;background:#555"></div>
<div style="left:87.2px;top:69.5px;width:9.5px;height:1px;background:#555"></div>
<div style="left:135.2px;top:69.5px;width:11.5px;height:1px;background:#555"></div>
<div style="left:192.1px;top:69.5px;width:4.5px;height:1px;background:#555"></div>
<div style="left:254.9px;top:69.5px;width:12px;height:1px;background:#555"></div>
<div style="left:0px;top:0px;width:1899px;height:2px;background:#3b3b3b"></div>
<div style="left:0px;top:0px;width:2px;height:1255px;background:#3b3b3b"></div>
<div style="left:1896px;top:0px;width:3px;height:1255px;background:#3b3b3b"></div>
<div style="left:0px;top:1253px;width:1899px;height:2px;background:#3b3b3b"></div>
<div class="t" style="left:7.70px;top:1231.16px;font-size:18px;line-height:18px;color:#000;letter-spacing:0.351px;">Redrawing map</div>
<div style="left:2px;top:1226px;width:183px;height:27px;border:4px solid #e8141c;box-sizing:border-box"></div>
<div class="t" style="left:1303.80px;top:1230.36px;font-size:18px;line-height:18px;color:#000;letter-spacing:-0.350px;transform:scaleX(0.9745);transform-origin:0.00px 0;">x: 169.334 mm y: 82.7021 mm page: 1</div>
<div style="left:1205px;top:1226px;width:103px;height:24px;border:4px solid #e8141c;box-sizing:border-box"></div>
<div style="left:1219px;top:1231px;width:81px;height:14px;background:repeating-linear-gradient(60deg,#0b88ef 0px,#0b88ef 6px,#0c78d6 6px,#0c78d6 9px);border-radius:3px;border:1px solid #0d6fc0;box-sizing:border-box"></div>
<div style="left:1621px;top:1225px;width:156px;height:26px;background:#fff;border:1px solid #c4c4c4;border-radius:2px;box-sizing:border-box"></div>
<div style="left:1745px;top:1226px;width:31px;height:24px;background:#f4f4f4"></div>
<svg style="left:1745px;top:1226px;" width="31" height="24" viewBox="0 0 31 24"><path d="M9.5 9 L21.5 9 L15.5 15.5 Z" fill="#555"/></svg>
<div class="t" style="left:1625.50px;top:1230.36px;font-size:18px;line-height:18px;color:#000;letter-spacing:-0.350px;transform:scaleX(0.9430);transform-origin:0.00px 0;">74.1%</div>
<div style="left:1782px;top:1233px;width:91px;height:10px;background:linear-gradient(#e2e2e2,#f0f0f0);border:1px solid #cfcfcf;border-radius:3px;box-sizing:border-box"></div>
<div style="left:1783px;top:1234px;width:6px;height:8px;background:#1c86e6;border-radius:2px"></div>
<div style="left:1788px;top:1226px;width:22px;height:23px;background:linear-gradient(#fdfdfd,#ececec);border:1px solid #b9b9b9;border-radius:3px;box-sizing:border-box"></div>
<div style="left:1592px;top:226px;width:304px;height:1px;background:#cdcdcd"></div>
<div style="left:1592px;top:191px;width:134px;height:35.5px;background:linear-gradient(#e3e3e3,#d9d9d9);border:1px solid #cdcdcd;border-radius:2px 2px 0 0;box-sizing:border-box"></div>
<div style="left:1511px;top:189.5px;width:82px;height:37.5px;background:linear-gradient(#fdfdfd,#f2f2f2);border:1px solid #cdcdcd;border-bottom:none;border-radius:2px 2px 0 0;box-sizing:border-box"></div>
<div class="t" style="left:1530.50px;top:201.36px;font-size:18px;line-height:18px;color:#000;letter-spacing:-0.350px;transform:scaleX(0.9857);transform-origin:0.00px 0;">Items</div>
<div class="t" style="left:1611.00px;top:202.36px;font-size:18px;line-height:18px;color:#000;letter-spacing:-0.350px;transform:scaleX(0.9582);transform-origin:0.00px 0;">Undo History</div>
<div class="t" style="left:1514.00px;top:233.36px;font-size:18px;line-height:18px;color:#000;letter-spacing:0.498px;">Items</div>
<svg style="left:1872px;top:236px;" width="25" height="10" viewBox="0 0 25 10"><rect x="1.5" y="0.5" width="8.5" height="8.5" rx="1" fill="#f4f4f4" stroke="#8a8a8a"/><rect x="3.5" y="3" width="4.5" height="4" fill="none" stroke="#8a8a8a" stroke-width="0.9"/>
<rect x="14" y="0.5" width="8.5" height="8.5" rx="1" fill="#f4f4f4" stroke="#8a8a8a"/><path d="M16 2.5 L20.5 7 M20.5 2.5 L16 7" stroke="#555" stroke-width="1.2"/></svg>
<div style="left:1511px;top:252.5px;width:385px;height:112px;background:#fff;border:1px solid #c9c9c9;border-right:none;box-sizing:border-box"></div>
<div style="left:1512px;top:253.5px;width:384px;height:31px;background:linear-gradient(#ffffff,#f3f3f3);border-bottom:1px solid #d5d5d5;box-sizing:border-box"></div>
<div style="left:1567px;top:253.5px;width:1px;height:31px;background:#e2e2e2"></div>
<div style="left:1623px;top:253.5px;width:1px;height:31px;background:#e2e2e2"></div>
<svg style="left:1514px;top:258px;" width="28" height="22" viewBox="0 0 28 22"><path d="M1.5 10.5 Q13 -0.5 25 10.5 Q13 21 1.5 10.5 Z" fill="#f2f2f2" stroke="#8a8a8a" stroke-width="1.3"/>
<circle cx="12.6" cy="10.3" r="4.6" fill="#9a9a9a" stroke="#6a6a6a" stroke-width="1"/><circle cx="12.6" cy="10.3" r="2" fill="#222"/><circle cx="11.3" cy="9" r="1" fill="#fff"/>
<path d="M5 4 Q13 0.5 23 4" fill="none" stroke="#8a8a8a" stroke-width="1"/></svg>
<svg style="left:1572px;top:256px;" width="24" height="26" viewBox="0 0 24 26"><path d="M6 12 V8 A6 6 0 0 1 18 8 V12" fill="none" stroke="#7a7a7a" stroke-width="2.4"/>
<rect x="2.5" y="12" width="19" height="12.5" rx="2" fill="#656565"/></svg>
<div class="t" style="left:1627.00px;top:257.36px;font-size:18px;line-height:18px;color:#000;letter-spacing:-0.070px;">Item</div>
<div style="left:1514.3px;top:287.5px;width:22px;height:22px;background:#ffffff;border:1px solid #c4c4c4;border-radius:1px;box-sizing:border-box"></div>
<svg style="left:1514.3px;top:287.5px;" width="22" height="22" viewBox="0 0 22 22"><path d="M4.5 11.5 L8.8 17.8 L17 4.5" fill="none" stroke="#000" stroke-width="2.4" stroke-linejoin="miter"/></svg>
<div style="left:1570.4px;top:287.5px;width:22px;height:22px;background:#ffffff;border:1px solid #c4c4c4;border-radius:1px;box-sizing:border-box"></div>
<svg style="left:1627px;top:287px;" width="25" height="21" viewBox="0 0 25 21"><defs><linearGradient id="mg" x1="0" x2="1"><stop offset="0" stop-color="#d8d8d8"/><stop offset="0.5" stop-color="#f8f8f8"/><stop offset="1" stop-color="#cfcfcf"/></linearGradient></defs>
<rect x="3" y="1.5" width="20" height="18" fill="url(#mg)" stroke="#8c8c8c" stroke-width="1"/><path d="M3 1.5 Q1 1.5 1 4 V19 Q1 20.5 3 20.5 H8" fill="#e6e6e6" stroke="#8c8c8c" stroke-width="1"/></svg>
<div class="t" style="left:1657.60px;top:290.32px;font-size:19px;line-height:19px;font-weight:bold;color:#000;letter-spacing:0.184px;">Map 1</div>
<svg style="left:1698px;top:368px;" width="16" height="3" viewBox="0 0 16 3"><rect x="0.0" y="0" width="1" height="1" fill="#aaa"/><rect x="2.5" y="0" width="1" height="1" fill="#aaa"/><rect x="5.0" y="0" width="1" height="1" fill="#aaa"/><rect x="7.5" y="0" width="1" height="1" fill="#aaa"/><rect x="10.0" y="0" width="1" height="1" fill="#aaa"/><rect x="12.5" y="0" width="1" height="1" fill="#aaa"/></svg>
<div style="left:1511px;top:411.5px;width:385px;height:1px;background:#cdcdcd"></div>
<div style="left:1511px;top:376.4px;width:83px;height:35.10000000000002px;background:linear-gradient(#e3e3e3,#d9d9d9);border:1px solid #cdcdcd;border-radius:2px 2px 0 0;box-sizing:border-box"></div>
<div style="left:1744px;top:376.4px;width:85px;height:35.10000000000002px;background:linear-gradient(#e3e3e3,#d9d9d9);border:1px solid #cdcdcd;border-radius:2px 2px 0 0;box-sizing:border-box"></div>
<div style="left:1828px;top:376.4px;width:68px;height:35.10000000000002px;background:linear-gradient(#e3e3e3,#d9d9d9);border:1px solid #cdcdcd;border-radius:2px 2px 0 0;box-sizing:border-box"></div>
<div style="left:1593px;top:374.5px;width:152px;height:38.0px;background:linear-gradient(#fdfdfd,#f2f2f2);border:1px solid #cdcdcd;border-bottom:none;border-radius:2px 2px 0 0;box-sizing:border-box"></div>
<div class="t" style="left:1532.60px;top:387.36px;font-size:18px;line-height:18px;color:#000;letter-spacing:-0.350px;transform:scaleX(0.9240);transform-origin:0.00px 0;">Lay...</div>
<div class="t" style="left:1613.50px;top:387.36px;font-size:18px;line-height:18px;color:#000;letter-spacing:-0.350px;transform:scaleX(0.9970);transform-origin:0.00px 0;">Item Propert...</div>
<div class="t" style="left:1765.80px;top:387.36px;font-size:18px;line-height:18px;color:#000;letter-spacing:-0.350px;transform:scaleX(0.9159);transform-origin:0.00px 0;">Gui...</div>
<div class="t" style="left:1847.80px;top:387.36px;font-size:18px;line-height:18px;color:#000;letter-spacing:-0.350px;transform:scaleX(0.9236);transform-origin:0.00px 0;">At...</div>
<div class="t" style="left:1514.30px;top:418.86px;font-size:18px;line-height:18px;color:#000;letter-spacing:0.476px;">Item Properties</div>
<svg style="left:1872px;top:421px;" width="25" height="10" viewBox="0 0 25 10"><rect x="1.5" y="0.5" width="8.5" height="8.5" rx="1" fill="#f4f4f4" stroke="#8a8a8a"/><rect x="3.5" y="3" width="4.5" height="4" fill="none" stroke="#8a8a8a" stroke-width="0.9"/>
<rect x="14" y="0.5" width="8.5" height="8.5" rx="1" fill="#f4f4f4" stroke="#8a8a8a"/><path d="M16 2.5 L20.5 7 M20.5 2.5 L16 7" stroke="#555" stroke-width="1.2"/></svg>
<div style="left:1511px;top:437px;width:385px;height:23px;background:#c6c6c6"></div>
<div class="t" style="left:1517.90px;top:439.52px;font-size:19px;line-height:19px;font-weight:bold;color:#000;letter-spacing:-0.350px;transform:scaleX(0.9492);transform-origin:0.00px 0;">Map 1</div>
<div style="left:1511px;top:504px;width:385px;height:718px;background:#f0f0f0;border:1px solid #c9c9c9;border-right:none;border-bottom:none;box-sizing:border-box"></div>
<div style="left:1874px;top:505px;width:22px;height:717px;background:linear-gradient(to right,#fdfdfd,#f4f4f4);border-left:1px solid #dcdcdc;box-sizing:border-box"></div>
<div style="left:1874px;top:526px;width:22px;height:1px;background:#dcdcdc"></div>
<div style="left:1874px;top:911px;width:22px;height:290px;background:#e6e6e6;border-left:1px solid #d6d6d6;border-top:1px solid #d3d3d3;box-sizing:border-box"></div>
<div style="left:1874px;top:1200px;width:22px;height:1px;background:#d3d3d3"></div>
<svg style="left:1874px;top:505px;" width="22" height="21" viewBox="0 0 22 21"><path d="M5 14.5 L11 8.3 L17 14.5 Z" fill="#555"/></svg>
<svg style="left:1874px;top:1201px;" width="22" height="21" viewBox="0 0 22 21"><path d="M5 5.5 L11 13.5 L17 5.5 Z" fill="#555"/></svg>
<div style="left:1500px;top:1222px;width:396px;height:1px;background:#c9c9c9"></div>
<svg style="left:1522px;top:522px;" width="10" height="8" viewBox="0 0 10 8"><path d="M0.5 1.5 L9 1.5 L4.75 6.5 Z" fill="#1a1a1a"/></svg>
<div class="t" style="left:1539.50px;top:515.82px;font-size:19px;line-height:19px;font-weight:bold;color:#000;letter-spacing:-0.350px;transform:scaleX(0.9578);transform-origin:0.00px 0;">Main Properties</div>
<div style="left:1521px;top:540px;width:344px;height:161px;border:1px solid #d9d9d9;border-radius:2px;background:#ececec;box-sizing:border-box"></div>
<div class="t" style="left:1531.50px;top:559.36px;font-size:18px;line-height:18px;color:#000;letter-spacing:-0.350px;transform:scaleX(0.9060);transform-origin:0.00px 0;">Scale</div>
<div style="left:1631px;top:554.5px;width:178px;height:25.5px;background:#fff;border:1px solid #c9c9c9;border-radius:2px;box-sizing:border-box"></div>
<div class="t" style="left:1634.00px;top:559.36px;font-size:18px;line-height:18px;color:#000;letter-spacing:-0.350px;transform:scaleX(0.8840);transform-origin:0.00px 0;">15000</div>
<svg style="left:1817px;top:554px;" width="38" height="33" viewBox="0 0 38 33"><path d="M8.5 6.5 L1.9 14.3 L8.5 22.5 Z" fill="#9a9ca0" stroke="#2e2e2e" stroke-width="1.2" stroke-linejoin="round"/>
<rect x="8.5" y="3.5" width="17" height="21" fill="#fff" stroke="#868680" stroke-width="1.3"/>
<path d="M8.5 13.6 H25.5" stroke="#8a8a84" stroke-width="1.1"/>
<path d="M12 8.6 H22.5" stroke="#3c3e44" stroke-width="2.4" stroke-linecap="round"/>
<path d="M12.5 19 H22" stroke="#3c3e44" stroke-width="1.5" stroke-linecap="round"/>
<path d="M26.5 22.8 H36 L31.3 28.3 Z" fill="#444"/></svg>
<div class="t" style="left:1531.50px;top:599.76px;font-size:18px;line-height:18px;color:#000;letter-spacing:-0.350px;transform:scaleX(0.9789);transform-origin:0.00px 0;">Map rotation</div>
<div style="left:1631px;top:592.3px;width:178px;height:30.200000000000045px;background:#fff;border:1px solid #c9c9c9;border-radius:2px;box-sizing:border-box"></div>
<div style="left:1786px;top:593.3px;width:22px;height:28px;background:#fff;border-left:1px solid #dcdcdc;box-sizing:border-box"></div>
<svg style="left:1786px;top:593px;" width="22" height="29" viewBox="0 0 22 29"><path d="M5 11.5 L11 5.5 L17 11.5 Z M5 17 L11 23 L17 17 Z" fill="#4a4a4a"/></svg>
<div class="t" style="left:1634.80px;top:599.76px;font-size:18px;line-height:18px;color:#000;letter-spacing:-0.350px;transform:scaleX(0.9934);transform-origin:0.00px 0;">0.00 °</div>
<svg style="left:1817px;top:594px;" width="38" height="33" viewBox="0 0 38 33"><path d="M8.5 6.5 L1.9 14.3 L8.5 22.5 Z" fill="#9a9ca0" stroke="#2e2e2e" stroke-width="1.2" stroke-linejoin="round"/>
<rect x="8.5" y="3.5" width="17" height="21" fill="#fff" stroke="#868680" stroke-width="1.3"/>
<path d="M8.5 13.6 H25.5" stroke="#8a8a84" stroke-width="1.1"/>
<path d="M12 8.6 H22.5" stroke="#3c3e44" stroke-width="2.4" stroke-linecap="round"/>
<path d="M12.5 19 H22" stroke="#3c3e44" stroke-width="1.5" stroke-linecap="round"/>
<path d="M26.5 22.8 H36 L31.3 28.3 Z" fill="#444"/></svg>
<div class="t" style="left:1531.50px;top:636.56px;font-size:18px;line-height:18px;color:#000;letter-spacing:-0.350px;transform:scaleX(0.8181);transform-origin:0.00px 0;">CRS</div>
<div style="left:1631px;top:630px;width:186px;height:30.5px;background:linear-gradient(#fbfbfb,#eaeaea);border:1px solid #c2c2c2;border-radius:2px;box-sizing:border-box"></div>
<div class="t" style="left:1635.50px;top:636.56px;font-size:18px;line-height:18px;color:#000;letter-spacing:-0.350px;transform:scaleX(0.9279);transform-origin:0.00px 0;">Use project CRS</div>
<svg style="left:1792px;top:640px;" width="16" height="10" viewBox="0 0 16 10"><path d="M1.5 1.5 H13.5 L7.5 8 Z" fill="#555"/></svg>
<div style="left:1822.5px;top:630px;width:31.5px;height:30.5px;background:linear-gradient(#fbfbfb,#ececec);border:1px solid #c4c4c4;border-radius:2px;box-sizing:border-box"></div>
<svg style="left:1826px;top:635px;" width="26" height="23" viewBox="0 0 26 23"><path d="M2.5 11 A10 9 0 0 1 22.5 11 Z" fill="#8ab8e6" stroke="#6f8fb0" stroke-width="1"/>
<path d="M2.5 11 Q12.5 16 22.5 11 M12.5 2 V19 M6 4 Q12.5 10 19 4 M2.5 11 A10 8 0 0 0 12.5 19" fill="none" stroke="#7a8ea8" stroke-width="1"/>
<path d="M12.5 2 Q3 8 4 15 M12.5 2 Q22 8 21 15" fill="none" stroke="#9aa" stroke-width="0.8"/>
<rect x="13" y="11" width="11" height="11" rx="1.5" fill="#cfae22" stroke="#a58a10" stroke-width="0.8"/><path d="M15.5 19.5 L21.5 13.5" stroke="#fff" stroke-width="1.8"/></svg>
<div style="left:1531.5px;top:667px;width:22px;height:22px;background:#ffffff;border:1px solid #c4c4c4;border-radius:1px;box-sizing:border-box"></div>
<svg style="left:1531.5px;top:667px;" width="22" height="22" viewBox="0 0 22 22"><path d="M4.5 11.5 L8.8 17.8 L17 4.5" fill="none" stroke="#000" stroke-width="2.4" stroke-linejoin="miter"/></svg>
<div class="t" style="left:1563.00px;top:670.16px;font-size:18px;line-height:18px;color:#000;letter-spacing:-0.350px;transform:scaleX(0.9673);transform-origin:0.00px 0;">Draw map canvas items</div>
<svg style="left:1522px;top:714px;" width="10" height="8" viewBox="0 0 10 8"><path d="M0.5 1.5 L9 1.5 L4.75 6.5 Z" fill="#1a1a1a"/></svg>
<div class="t" style="left:1539.50px;top:708.12px;font-size:19px;line-height:19px;font-weight:bold;color:#000;letter-spacing:-0.350px;transform:scaleX(0.9156);transform-origin:0.00px 0;">Layers</div>
<div style="left:1521px;top:733px;width:344px;height:125px;border:1px solid #d9d9d9;border-radius:2px;background:#ececec;box-sizing:border-box"></div>
<div style="left:1531.5px;top:748.2px;width:22px;height:22px;background:#ffffff;border:1px solid #c4c4c4;border-radius:1px;box-sizing:border-box"></div>
<div class="t" style="left:1563.00px;top:752.06px;font-size:18px;line-height:18px;color:#000;letter-spacing:-0.350px;transform:scaleX(0.9752);transform-origin:0.00px 0;">Follow map theme</div>
<div style="left:1711px;top:746.7px;width:98px;height:25.7px;background:linear-gradient(#fbfbfb,#ececec);border:1px solid #c4c4c4;border-radius:2px;box-sizing:border-box"></div>
<div class="t" style="left:1715.50px;top:752.06px;font-size:18px;line-height:18px;color:#000;letter-spacing:-0.350px;transform:scaleX(0.9747);transform-origin:0.00px 0;">(none)</div>
<svg style="left:1784px;top:754px;" width="16" height="10" viewBox="0 0 16 10"><path d="M1.5 1.5 H13.5 L7.5 8 Z" fill="#555"/></svg>
<svg style="left:1817px;top:747px;" width="38" height="33" viewBox="0 0 38 33"><path d="M8.5 6.5 L1.9 14.3 L8.5 22.5 Z" fill="#9a9ca0" stroke="#2e2e2e" stroke-width="1.2" stroke-linejoin="round"/>
<rect x="8.5" y="3.5" width="17" height="21" fill="#fff" stroke="#868680" stroke-width="1.3"/>
<path d="M8.5 13.6 H25.5" stroke="#8a8a84" stroke-width="1.1"/>
<path d="M12 8.6 H22.5" stroke="#3c3e44" stroke-width="2.4" stroke-linecap="round"/>
<path d="M12.5 19 H22" stroke="#3c3e44" stroke-width="1.5" stroke-linecap="round"/>
<path d="M26.5 22.8 H36 L31.3 28.3 Z" fill="#444"/></svg>
<div style="left:1531.5px;top:788px;width:22px;height:22px;background:#ffffff;border:1px solid #c4c4c4;border-radius:1px;box-sizing:border-box"></div>
<div class="t" style="left:1563.00px;top:791.56px;font-size:18px;line-height:18px;color:#000;letter-spacing:-0.350px;transform:scaleX(0.9317);transform-origin:0.00px 0;">Lock layers</div>
<div style="left:1777.4px;top:784.6px;width:32px;height:30.8px;background:linear-gradient(#fbfbfb,#ececec);border:1px solid #c4c4c4;border-radius:2px;box-sizing:border-box"></div>
<svg style="left:1780px;top:790px;" width="28" height="22" viewBox="0 0 28 22"><path d="M2 10 Q13 -1 24 10 Q13 20 2 10 Z" fill="#f5f5f5" stroke="#6b6b6b" stroke-width="1.2"/>
<circle cx="12.5" cy="10" r="4.8" fill="#5b8fd0" stroke="#3e6aa8"/><circle cx="12.5" cy="10" r="2" fill="#111"/>
<path d="M5 4 Q13 0 22 4" fill="none" stroke="#6b6b6b" stroke-width="1"/><path d="M14 14 L23 14 L18.5 19.5 Z" fill="#3a3a3a"/></svg>
<svg style="left:1817px;top:787px;" width="38" height="33" viewBox="0 0 38 33"><path d="M8.5 6.5 L1.9 14.3 L8.5 22.5 Z" fill="#9a9ca0" stroke="#2e2e2e" stroke-width="1.2" stroke-linejoin="round"/>
<rect x="8.5" y="3.5" width="17" height="21" fill="#fff" stroke="#868680" stroke-width="1.3"/>
<path d="M8.5 13.6 H25.5" stroke="#8a8a84" stroke-width="1.1"/>
<path d="M12 8.6 H22.5" stroke="#3c3e44" stroke-width="2.4" stroke-linecap="round"/>
<path d="M12.5 19 H22" stroke="#3c3e44" stroke-width="1.5" stroke-linecap="round"/>
<path d="M26.5 22.8 H36 L31.3 28.3 Z" fill="#444"/></svg>
<div style="left:1531.5px;top:824px;width:22px;height:22px;background:#f0f0f0;border:1px solid #d2d2d2;border-radius:1px;box-sizing:border-box"></div>
<div class="t" style="left:1563.00px;top:826.66px;font-size:18px;line-height:18px;color:#7c7c7c;letter-spacing:-0.350px;transform:scaleX(0.9572);transform-origin:0.00px 0;">Lock styles for layers</div>
<svg style="left:1522px;top:871px;" width="10" height="8" viewBox="0 0 10 8"><path d="M0.5 1.5 L9 1.5 L4.75 6.5 Z" fill="#1a1a1a"/></svg>
<div class="t" style="left:1539.50px;top:864.72px;font-size:19px;line-height:19px;font-weight:bold;color:#000;letter-spacing:-0.350px;transform:scaleX(0.9537);transform-origin:0.00px 0;">Extents</div>
<div style="left:1521px;top:889.5px;width:344px;height:176.5px;border:1px solid #d9d9d9;border-radius:2px;background:#ececec;box-sizing:border-box"></div>
<div class="t" style="left:1531.50px;top:909.36px;font-size:18px;line-height:18px;color:#000;letter-spacing:-0.350px;transform:scaleX(0.9666);transform-origin:0.00px 0;">X min</div>
<div style="left:1583.4px;top:904.2px;width:225.5999999999999px;height:25.600000000000023px;background:#fff;border:1px solid #c9c9c9;border-radius:2px;box-sizing:border-box"></div>
<div class="t" style="left:1585.50px;top:909.36px;font-size:18px;line-height:18px;color:#000;letter-spacing:-0.350px;transform:scaleX(0.9078);transform-origin:0.00px 0;">653028.294</div>
<svg style="left:1817px;top:903.2px;" width="38" height="33" viewBox="0 0 38 33"><path d="M8.5 6.5 L1.9 14.3 L8.5 22.5 Z" fill="#9a9ca0" stroke="#2e2e2e" stroke-width="1.2" stroke-linejoin="round"/>
<rect x="8.5" y="3.5" width="17" height="21" fill="#fff" stroke="#868680" stroke-width="1.3"/>
<path d="M8.5 13.6 H25.5" stroke="#8a8a84" stroke-width="1.1"/>
<path d="M12 8.6 H22.5" stroke="#3c3e44" stroke-width="2.4" stroke-linecap="round"/>
<path d="M12.5 19 H22" stroke="#3c3e44" stroke-width="1.5" stroke-linecap="round"/>
<path d="M26.5 22.8 H36 L31.3 28.3 Z" fill="#444"/></svg>
<div class="t" style="left:1531.50px;top:949.36px;font-size:18px;line-height:18px;color:#000;letter-spacing:-0.350px;transform:scaleX(0.9725);transform-origin:0.00px 0;">Y min</div>
<div style="left:1583.4px;top:944px;width:225.5999999999999px;height:25.600000000000023px;background:#fff;border:1px solid #c9c9c9;border-radius:2px;box-sizing:border-box"></div>
<div class="t" style="left:1585.50px;top:949.36px;font-size:18px;line-height:18px;color:#000;letter-spacing:-0.350px;transform:scaleX(0.9078);transform-origin:0.00px 0;">475708.824</div>
<svg style="left:1817px;top:943px;" width="38" height="33" viewBox="0 0 38 33"><path d="M8.5 6.5 L1.9 14.3 L8.5 22.5 Z" fill="#9a9ca0" stroke="#2e2e2e" stroke-width="1.2" stroke-linejoin="round"/>
<rect x="8.5" y="3.5" width="17" height="21" fill="#fff" stroke="#868680" stroke-width="1.3"/>
<path d="M8.5 13.6 H25.5" stroke="#8a8a84" stroke-width="1.1"/>
<path d="M12 8.6 H22.5" stroke="#3c3e44" stroke-width="2.4" stroke-linecap="round"/>
<path d="M12.5 19 H22" stroke="#3c3e44" stroke-width="1.5" stroke-linecap="round"/>
<path d="M26.5 22.8 H36 L31.3 28.3 Z" fill="#444"/></svg>
<div class="t" style="left:1531.50px;top:989.36px;font-size:18px;line-height:18px;color:#000;letter-spacing:-0.350px;transform:scaleX(0.9309);transform-origin:0.00px 0;">X max</div>
<div style="left:1583.4px;top:984px;width:225.5999999999999px;height:25.600000000000023px;background:#fff;border:1px solid #c9c9c9;border-radius:2px;box-sizing:border-box"></div>
<div class="t" style="left:1585.50px;top:989.36px;font-size:18px;line-height:18px;color:#000;letter-spacing:-0.350px;transform:scaleX(0.9078);transform-origin:0.00px 0;">657216.282</div>
<svg style="left:1817px;top:983px;" width="38" height="33" viewBox="0 0 38 33"><path d="M8.5 6.5 L1.9 14.3 L8.5 22.5 Z" fill="#9a9ca0" stroke="#2e2e2e" stroke-width="1.2" stroke-linejoin="round"/>
<rect x="8.5" y="3.5" width="17" height="21" fill="#fff" stroke="#868680" stroke-width="1.3"/>
<path d="M8.5 13.6 H25.5" stroke="#8a8a84" stroke-width="1.1"/>
<path d="M12 8.6 H22.5" stroke="#3c3e44" stroke-width="2.4" stroke-linecap="round"/>
<path d="M12.5 19 H22" stroke="#3c3e44" stroke-width="1.5" stroke-linecap="round"/>
<path d="M26.5 22.8 H36 L31.3 28.3 Z" fill="#444"/></svg>
<div class="t" style="left:1531.50px;top:1029.26px;font-size:18px;line-height:18px;color:#000;letter-spacing:-0.350px;transform:scaleX(0.9377);transform-origin:0.00px 0;">Y max</div>
<div style="left:1583.4px;top:1024px;width:225.5999999999999px;height:25.59999999999991px;background:#fff;border:1px solid #c9c9c9;border-radius:2px;box-sizing:border-box"></div>
<div class="t" style="left:1585.50px;top:1029.26px;font-size:18px;line-height:18px;color:#000;letter-spacing:-0.350px;transform:scaleX(0.9078);transform-origin:0.00px 0;">478461.232</div>
<svg style="left:1817px;top:1023px;" width="38" height="33" viewBox="0 0 38 33"><path d="M8.5 6.5 L1.9 14.3 L8.5 22.5 Z" fill="#9a9ca0" stroke="#2e2e2e" stroke-width="1.2" stroke-linejoin="round"/>
<rect x="8.5" y="3.5" width="17" height="21" fill="#fff" stroke="#868680" stroke-width="1.3"/>
<path d="M8.5 13.6 H25.5" stroke="#8a8a84" stroke-width="1.1"/>
<path d="M12 8.6 H22.5" stroke="#3c3e44" stroke-width="2.4" stroke-linecap="round"/>
<path d="M12.5 19 H22" stroke="#3c3e44" stroke-width="1.5" stroke-linecap="round"/>
<path d="M26.5 22.8 H36 L31.3 28.3 Z" fill="#444"/></svg>
<svg style="left:1523px;top:1077px;" width="8" height="10" viewBox="0 0 8 10"><path d="M1.5 0.5 L6.5 4.75 L1.5 9 Z" fill="#b0b0b0"/></svg>
<div style="left:1536px;top:1071px;width:22px;height:22px;background:#f0f0f0;border:1px solid #d2d2d2;border-radius:1px;box-sizing:border-box"></div>
<div class="t" style="left:1571.40px;top:1073.52px;font-size:19px;line-height:19px;font-weight:bold;color:#7a7a7a;letter-spacing:-0.350px;transform:scaleX(0.9428);transform-origin:0.00px 0;">Controlled by Atlas</div>
<svg style="left:1523px;top:1103.7px;" width="8" height="10" viewBox="0 0 8 10"><path d="M1.5 0.5 L6.5 4.75 L1.5 9 Z" fill="#1a1a1a"/></svg>
<div class="t" style="left:1539.50px;top:1100.22px;font-size:19px;line-height:19px;font-weight:bold;color:#000;letter-spacing:-0.350px;transform:scaleX(0.9027);transform-origin:0.00px 0;">Grids</div>
<svg style="left:1523px;top:1128.5px;" width="8" height="10" viewBox="0 0 8 10"><path d="M1.5 0.5 L6.5 4.75 L1.5 9 Z" fill="#1a1a1a"/></svg>
<div class="t" style="left:1539.50px;top:1125.02px;font-size:19px;line-height:19px;font-weight:bold;color:#000;letter-spacing:-0.350px;transform:scaleX(0.9372);transform-origin:0.00px 0;">Overviews</div>
<svg style="left:1523px;top:1153.1px;" width="8" height="10" viewBox="0 0 8 10"><path d="M1.5 0.5 L6.5 4.75 L1.5 9 Z" fill="#1a1a1a"/></svg>
<div class="t" style="left:1539.50px;top:1149.62px;font-size:19px;line-height:19px;font-weight:bold;color:#000;letter-spacing:-0.350px;transform:scaleX(0.9333);transform-origin:0.00px 0;">Position and Size</div>
<svg style="left:1523px;top:1187.8px;" width="8" height="10" viewBox="0 0 8 10"><path d="M1.5 0.5 L6.5 4.75 L1.5 9 Z" fill="#1a1a1a"/></svg>
<div class="t" style="left:1539.50px;top:1184.32px;font-size:19px;line-height:19px;font-weight:bold;color:#000;letter-spacing:-0.350px;transform:scaleX(0.9639);transform-origin:0.00px 0;">Rotation</div>
<div style="left:1536px;top:1216.5px;width:23px;height:5.5px;background:#fff;border:1px solid #c4c4c4;border-bottom:none;box-sizing:border-box"></div>
<div style="left:824px;top:91.5px;width:93px;height:26px;background:linear-gradient(#fbfbfb,#ececec);border:1px solid #c6c6c6;border-radius:2px;box-sizing:border-box"></div>
<div style="left:884.5px;top:92.5px;width:31.5px;height:24px;background:#f8f8f8"></div>
<svg style="left:884.5px;top:92.5px;" width="32" height="24" viewBox="0 0 32 24"><path d="M8.5 8 H21 L14.75 15 Z" fill="#8a8a8a"/></svg>
<div class="t" style="left:828.50px;top:95.86px;font-size:18px;line-height:18px;color:#333;">1</div>
<svg style="left:0px;top:0px;pointer-events:none" width="1899" height="1255" viewBox="0 0 1899 1255"><rect x="29" y="86.3" width="31.5" height="33.7" rx="3.5" fill="#6594cc" stroke="#3a6496" stroke-width="1.5"/>
<rect x="33.7" y="88.4" width="22.1" height="13.7" rx="1" fill="#f2f2f2" stroke="#6d6d6d" stroke-width="1"/>
<path d="M36.3 92.1 H53.2 M36.3 95.3 H53.2 M36.3 98.4 H53.2" stroke="#555" stroke-width="1.3"/>
<rect x="35.8" y="107.9" width="18.4" height="11.6" fill="#e8e8e8" stroke="#6d6d6d" stroke-width="1"/>
<rect x="37.9" y="110" width="4.2" height="6.3" fill="#36577f"/><rect x="73.5" y="87.5" width="1" height="34" fill="#dcdcdc"/><rect x="317.5" y="87.5" width="1" height="34" fill="#dcdcdc"/><rect x="374.5" y="87.5" width="1" height="34" fill="#dcdcdc"/><path d="M85.8 88.5 H110.7 L119.2 97.0 V119.3 H85.8 Z" fill="#fff" stroke="#6e6e6e" stroke-width="1.5" stroke-linejoin="miter"/><path d="M110.7 88.5 V97.0 H119.2" fill="#f0f0f0" stroke="#6e6e6e" stroke-width="1.3"/><path d="M110.0 91.5 H88.8 V116.3 H116.2 V97.7" fill="none" stroke="#b9cdf5" stroke-width="1.3"/><path d="M88.5 89.5 H103.5 V99 H95.8 V121.5 H88.5 Z" fill="#f8dc64" stroke="#cfa826" stroke-width="1.2"/><path d="M88.8 89.8 L95.5 98.5" stroke="#d9b640" stroke-width="1"/><path d="M89 99 H94.5" stroke="#9a7810" stroke-width="1.2"/><path d="M89 102 H94.5" stroke="#9a7810" stroke-width="1.2"/><path d="M89 105 H94.5" stroke="#9a7810" stroke-width="1.2"/><path d="M89 108 H94.5" stroke="#9a7810" stroke-width="1.2"/><path d="M89 111 H94.5" stroke="#9a7810" stroke-width="1.2"/><path d="M89 114 H94.5" stroke="#9a7810" stroke-width="1.2"/><rect x="104.3" y="105.8" width="17" height="17" rx="3" fill="#c9a106"/><rect x="105.8" y="107.3" width="14" height="7.0" rx="2" fill="#dcc04a" opacity="0.55"/><line x1="112.8" y1="114.3" x2="112.80" y2="121.44" stroke="#fff" stroke-width="2.1"/><line x1="112.8" y1="114.3" x2="106.62" y2="117.87" stroke="#fff" stroke-width="2.1"/><line x1="112.8" y1="114.3" x2="106.62" y2="110.73" stroke="#fff" stroke-width="2.1"/><line x1="112.8" y1="114.3" x2="112.80" y2="107.16" stroke="#fff" stroke-width="2.1"/><line x1="112.8" y1="114.3" x2="118.98" y2="110.73" stroke="#fff" stroke-width="2.1"/><line x1="112.8" y1="114.3" x2="118.98" y2="117.87" stroke="#fff" stroke-width="2.1"/><circle cx="112.8" cy="114.3" r="3.4" fill="#fff"/><circle cx="112.8" cy="114.3" r="1.5" fill="#c9a106"/><rect x="130.6" y="88.6" width="19.5" height="30.5" fill="#cdcdcd" stroke="#707070" stroke-width="1.5"/><path d="M135.6 85.6 H158.7 L167.2 94.1 V114.2 H135.6 Z" fill="#fff" stroke="#6e6e6e" stroke-width="1.5" stroke-linejoin="miter"/><path d="M158.7 85.6 V94.1 H167.2" fill="#f0f0f0" stroke="#6e6e6e" stroke-width="1.3"/><path d="M158.0 88.6 H138.6 V111.2 H164.2 V94.8" fill="none" stroke="#b9cdf5" stroke-width="1.3"/><rect x="150.7" y="105.8" width="17" height="17" rx="3" fill="#c9a106"/><rect x="152.2" y="107.3" width="14" height="7.0" rx="2" fill="#dcc04a" opacity="0.55"/><line x1="159.2" y1="114.3" x2="159.20" y2="121.44" stroke="#fff" stroke-width="2.1"/><line x1="159.2" y1="114.3" x2="153.02" y2="117.87" stroke="#fff" stroke-width="2.1"/><line x1="159.2" y1="114.3" x2="153.02" y2="110.73" stroke="#fff" stroke-width="2.1"/><line x1="159.2" y1="114.3" x2="159.20" y2="107.16" stroke="#fff" stroke-width="2.1"/><line x1="159.2" y1="114.3" x2="165.38" y2="110.73" stroke="#fff" stroke-width="2.1"/><line x1="159.2" y1="114.3" x2="165.38" y2="117.87" stroke="#fff" stroke-width="2.1"/><circle cx="159.2" cy="114.3" r="3.4" fill="#fff"/><circle cx="159.2" cy="114.3" r="1.5" fill="#c9a106"/><path d="M178.3 88.5 H204.0 L212.5 97.0 V119.3 H178.3 Z" fill="#fff" stroke="#6e6e6e" stroke-width="1.5" stroke-linejoin="miter"/><path d="M204.0 88.5 V97.0 H212.5" fill="#f0f0f0" stroke="#6e6e6e" stroke-width="1.3"/><path d="M203.3 91.5 H181.3 V116.3 H209.5 V97.7" fill="none" stroke="#b9cdf5" stroke-width="1.3"/><path d="M200 105 L212.5 121" stroke="#333" stroke-width="6.6" stroke-linecap="round"/>
<path d="M200 105 L212.5 121" stroke="#e3c95a" stroke-width="4" stroke-linecap="round"/>
<path d="M200 105 L205 110" stroke="#e6e6e6" stroke-width="4"/>
<path d="M196.07 94.46 A7.6 7.6 0 1 1 189.46 101.07 L193.13 101.52 A3.4 3.4 0 1 0 196.52 98.13 Z" fill="#ececec" stroke="#333" stroke-width="1.4" stroke-linejoin="round"/>
<circle cx="211.3" cy="119.8" r="1.1" fill="#333"/><path d="M223.8 117.5 V90 H235.5 L237 93.5 H255.5 V99 Z" fill="#f5d24a" stroke="#c9a42a" stroke-width="1.2"/>
<path d="M223.8 117.5 L228.2 98.6 H259.5 L255 117.5 Z" fill="#fcd94e" stroke="#c9a42a" stroke-width="1.2" stroke-linejoin="round"/><rect x="272" y="86.3" width="31.5" height="33.7" rx="3.5" fill="#6594cc" stroke="#3a6496" stroke-width="1.5"/>
<rect x="276.7" y="88.4" width="22.1" height="13.7" rx="1" fill="#f2f2f2" stroke="#6d6d6d" stroke-width="1"/>
<path d="M279.3 92.1 H296.2 M279.3 95.3 H296.2 M279.3 98.4 H296.2" stroke="#555" stroke-width="1.3"/>
<rect x="278.8" y="107.9" width="18.4" height="11.6" fill="#e8e8e8" stroke="#6d6d6d" stroke-width="1"/>
<rect x="280.9" y="110" width="4.2" height="6.3" fill="#36577f"/><rect x="291.6" y="107.3" width="15.6" height="15.6" rx="3" fill="#5a9a58" stroke="#3d7a3a" stroke-width="0.8"/><path d="M295 119.5 L304 110.5" stroke="#fff" stroke-width="2.8" stroke-linecap="round"/><path d="M333.5 87.3 H350 L358 95.3 V121 H333.5 Z" fill="#fff" stroke="#6e6e6e" stroke-width="1.5" stroke-linejoin="miter"/><path d="M350 87.3 V95.3 H358" fill="#f0f0f0" stroke="#6e6e6e" stroke-width="1.3"/><rect x="347.5" y="105.8" width="17" height="17" rx="3" fill="#c9a106"/><rect x="349.0" y="107.3" width="14" height="7.0" rx="2" fill="#dcc04a" opacity="0.55"/><line x1="356.0" y1="114.3" x2="356.00" y2="121.44" stroke="#fff" stroke-width="2.1"/><line x1="356.0" y1="114.3" x2="349.82" y2="117.87" stroke="#fff" stroke-width="2.1"/><line x1="356.0" y1="114.3" x2="349.82" y2="110.73" stroke="#fff" stroke-width="2.1"/><line x1="356.0" y1="114.3" x2="356.00" y2="107.16" stroke="#fff" stroke-width="2.1"/><line x1="356.0" y1="114.3" x2="362.18" y2="110.73" stroke="#fff" stroke-width="2.1"/><line x1="356.0" y1="114.3" x2="362.18" y2="117.87" stroke="#fff" stroke-width="2.1"/><circle cx="356.0" cy="114.3" r="3.4" fill="#fff"/><circle cx="356.0" cy="114.3" r="1.5" fill="#c9a106"/><rect x="395" y="88" width="16.5" height="10" fill="#eeeeee" stroke="#777" stroke-width="1.2"/>
<rect x="387.5" y="95" width="31" height="16.5" rx="4" fill="#6f9fd6" stroke="#3e6a9e" stroke-width="1.4"/>
<rect x="394" y="104" width="18.5" height="16" fill="#f4f4f4" stroke="#777" stroke-width="1.2"/>
<path d="M397 108.5 H409.5 M397 112 H409.5 M397 115.5 H409.5" stroke="#888" stroke-width="1"/><path d="M432.6 85.6 H450.3 L457.3 92.6 V119.3 H432.6 Z" fill="#fff" stroke="#6e6e6e" stroke-width="1.5" stroke-linejoin="miter"/><path d="M450.3 85.6 V92.6 H457.3" fill="#f0f0f0" stroke="#6e6e6e" stroke-width="1.3"/><rect x="434.5" y="96.5" width="21" height="15.8" fill="#48a6e6" stroke="#3b6fa0" stroke-width="1"/><path d="M435 112 V104 L442.5 101 L455 105.5 V112 Z" fill="#c8b04a"/><rect x="451.6" y="105.8" width="17" height="17" rx="3" fill="#3b586f"/><rect x="452.6" y="106.8" width="15" height="8.5" rx="2" fill="#5a7890" opacity="0.6"/>
<path d="M459.6 109.8 H455.1 V118.8 H459.6" fill="none" stroke="#fff" stroke-width="2.6"/>
<path d="M458.6 114.3 H465.6 M462.6 111.3 L465.6 114.3 L462.6 117.3" fill="none" stroke="#fff" stroke-width="1.6"/><path d="M479.3 85.6 H496.5 L503.5 92.6 V119.3 H479.3 Z" fill="#fff" stroke="#6e6e6e" stroke-width="1.5" stroke-linejoin="miter"/><path d="M496.5 85.6 V92.6 H503.5" fill="#f0f0f0" stroke="#6e6e6e" stroke-width="1.3"/><line x1="491" y1="103.5" x2="491.00" y2="95.70" stroke="#f7961a" stroke-width="2.2"/><circle cx="491.00" cy="95.70" r="2.1" fill="#f7961a"/><line x1="491" y1="103.5" x2="497.75" y2="99.60" stroke="#f7961a" stroke-width="2.2"/><circle cx="497.75" cy="99.60" r="2.1" fill="#f7961a"/><line x1="491" y1="103.5" x2="497.75" y2="107.40" stroke="#f7961a" stroke-width="2.2"/><circle cx="497.75" cy="107.40" r="2.1" fill="#f7961a"/><line x1="491" y1="103.5" x2="491.00" y2="111.30" stroke="#f7961a" stroke-width="2.2"/><circle cx="491.00" cy="111.30" r="2.1" fill="#f7961a"/><line x1="491" y1="103.5" x2="484.25" y2="107.40" stroke="#f7961a" stroke-width="2.2"/><circle cx="484.25" cy="107.40" r="2.1" fill="#f7961a"/><line x1="491" y1="103.5" x2="484.25" y2="99.60" stroke="#f7961a" stroke-width="2.2"/><circle cx="484.25" cy="99.60" r="2.1" fill="#f7961a"/><circle cx="491" cy="103.5" r="2.6" fill="#f7961a"/><rect x="498.3" y="105.8" width="17" height="17" rx="3" fill="#3b586f"/><rect x="499.3" y="106.8" width="15" height="8.5" rx="2" fill="#5a7890" opacity="0.6"/>
<path d="M506.3 109.8 H501.8 V118.8 H506.3" fill="none" stroke="#fff" stroke-width="2.6"/>
<path d="M505.3 114.3 H512.3 M509.3 111.3 L512.3 114.3 L509.3 117.3" fill="none" stroke="#fff" stroke-width="1.6"/><path d="M525.4 85.6 H543.2 L550.2 92.6 V119.3 H525.4 Z" fill="#fff" stroke="#6e6e6e" stroke-width="1.5" stroke-linejoin="miter"/><path d="M543.2 85.6 V92.6 H550.2" fill="#f0f0f0" stroke="#6e6e6e" stroke-width="1.3"/><path d="M537.5 93 Q535 96 538 104 Q541 111 551 110 Q543 107 536 112 Q530 117 529 115 Q531 110 540 106 Q537 98 538.5 94 Z" fill="none" stroke="#e0201a" stroke-width="1.4"/><rect x="544.4" y="105.8" width="17" height="17" rx="3" fill="#3b586f"/><rect x="545.4" y="106.8" width="15" height="8.5" rx="2" fill="#5a7890" opacity="0.6"/>
<path d="M552.4 109.8 H547.9 V118.8 H552.4" fill="none" stroke="#fff" stroke-width="2.6"/>
<path d="M551.4 114.3 H558.4 M555.4 111.3 L558.4 114.3 L555.4 117.3" fill="none" stroke="#fff" stroke-width="1.6"/><path d="M575.5 101.5 L586 90.5 V96.5 H592 Q603.5 97 603.5 107.5 Q603.5 118 592 118 H586.5 V113 H591.5 Q597.5 113 597.5 107.5 Q597.5 102.5 591.5 102.5 H586 V112 Z" fill="#e57d36" stroke="#c8621e" stroke-width="1" stroke-linejoin="round"/><path d="M578 101.5 L585 94.5" stroke="#f6b07a" stroke-width="1"/><path d="M649 101.5 L638.5 90.5 V96.5 H632.5 Q621 97 621 107.5 Q621 118 632.5 118 H638 V113 H633 Q627 113 627 107.5 Q627 102.5 633 102.5 H638.5 V112 Z" fill="#dde0df" stroke="#c8cbca" stroke-width="1" stroke-linejoin="round"/><rect x="674.5" y="97" width="1" height="1" fill="#bbb"/><rect x="674.5" y="100" width="1" height="1" fill="#bbb"/><rect x="674.5" y="103" width="1" height="1" fill="#bbb"/><rect x="674.5" y="106" width="1" height="1" fill="#bbb"/><rect x="674.5" y="109" width="1" height="1" fill="#bbb"/><rect x="677.5" y="97" width="1" height="1" fill="#bbb"/><rect x="677.5" y="100" width="1" height="1" fill="#bbb"/><rect x="677.5" y="103" width="1" height="1" fill="#bbb"/><rect x="677.5" y="106" width="1" height="1" fill="#bbb"/><rect x="677.5" y="109" width="1" height="1" fill="#bbb"/><rect x="689" y="90.5" width="37" height="27.5" rx="5" fill="#dcdcdc" stroke="#c2c2c2" stroke-width="1.6"/><path d="M701 91 V118 M713 91 V118 M689.5 99 H725.5 M689.5 109 H725.5" stroke="#eeeeee" stroke-width="1.2"/><path d="M692 95.5 h3 l1 1 h3 l-1 2 h-2 l-1 1.5 h-2 z M705 94.5 h3 v2 h-3 z M716 94.5 h3 l1 1 h4 l-1 2 h-6 z M693 100 h4 l1 3 -1 3 -2 -1 z M703 100 h5 l1 5 -1 4 -2 2 -1 -4 z M716 100 h5 l-1 3 h-3 z M697 109 l2 3 -1 3 z M720 111 h3 v2 h-3 z" fill="#a8a8a8"/><rect x="738.3" y="87.5" width="4.6" height="33" fill="#d6d9db" stroke="#c2c6c8"/><path d="M743.5 104 L757 88.8 V98 H769 V110.5 H757 V119.5 Z" fill="#d6d9db" stroke="#c2c6c8" stroke-width="1"/><path d="M787.5 104 L801 88.8 V98 H813.5 V110.5 H801 V119.5 Z" fill="#d6d9db" stroke="#c2c6c8" stroke-width="1"/><path d="M954.5 104 L941 88.8 V98 H928 V110.5 H941 V119.5 Z" fill="#d6d9db" stroke="#c2c6c8" stroke-width="1"/><path d="M998 104 L984.5 88.8 V98 H972 V110.5 H984.5 V119.5 Z" fill="#d6d9db" stroke="#c2c6c8" stroke-width="1"/><rect x="998.5" y="87.5" width="4.6" height="33" fill="#d6d9db" stroke="#c2c6c8"/><rect x="1026" y="88" width="16" height="10" fill="#f2f2f2" stroke="#d0d0d0" stroke-width="1.2"/>
<rect x="1018.5" y="95" width="31" height="16.5" rx="4" fill="#dcdfe0" stroke="#cacdce" stroke-width="1.4"/>
<rect x="1025" y="104" width="18" height="15.5" fill="#f6f6f6" stroke="#d0d0d0" stroke-width="1.2"/>
<path d="M1028 108.5 H1040 M1028 112 H1040 M1028 115.5 H1040" stroke="#d8d8d8" stroke-width="1"/><line x1="1074.5" y1="97" x2="1074.50" y2="89.80" stroke="#f7961a" stroke-width="2.2"/><circle cx="1074.50" cy="89.80" r="2.1" fill="#f7961a"/><line x1="1074.5" y1="97" x2="1080.74" y2="93.40" stroke="#f7961a" stroke-width="2.2"/><circle cx="1080.74" cy="93.40" r="2.1" fill="#f7961a"/><line x1="1074.5" y1="97" x2="1080.74" y2="100.60" stroke="#f7961a" stroke-width="2.2"/><circle cx="1080.74" cy="100.60" r="2.1" fill="#f7961a"/><line x1="1074.5" y1="97" x2="1074.50" y2="104.20" stroke="#f7961a" stroke-width="2.2"/><circle cx="1074.50" cy="104.20" r="2.1" fill="#f7961a"/><line x1="1074.5" y1="97" x2="1068.26" y2="100.60" stroke="#f7961a" stroke-width="2.2"/><circle cx="1068.26" cy="100.60" r="2.1" fill="#f7961a"/><line x1="1074.5" y1="97" x2="1068.26" y2="93.40" stroke="#f7961a" stroke-width="2.2"/><circle cx="1068.26" cy="93.40" r="2.1" fill="#f7961a"/><circle cx="1074.5" cy="97" r="2.6" fill="#f7961a"/><rect x="1064.5" y="104" width="18" height="15.5" fill="#48a6e6" stroke="#3b6fa0" stroke-width="1"/><path d="M1065 119 V112 L1071 109.5 L1082 113 V119 Z" fill="#c8b04a"/><path d="M1086.5 88.5 Q1084 92 1087 99 Q1090 105 1097.5 104 Q1091 102 1084 107 Q1079 111 1078 109 Q1080 104 1088.5 101 Q1085.5 94 1087.5 89 Z" fill="none" stroke="#e0201a" stroke-width="1.3"/><rect x="1082" y="105.8" width="17" height="17" rx="3" fill="#3b586f"/><rect x="1083" y="106.8" width="15" height="8.5" rx="2" fill="#5a7890" opacity="0.6"/>
<path d="M1090 109.8 H1085.5 V118.8 H1090" fill="none" stroke="#fff" stroke-width="2.6"/>
<path d="M1089 114.3 H1096 M1093 111.3 L1096 114.3 L1093 117.3" fill="none" stroke="#fff" stroke-width="1.6"/><rect x="1108" y="87" width="31.5" height="24.5" rx="5" fill="#c6d8ee" stroke="#8eaed2" stroke-width="1.5"/><path d="M1118.5 87.5 V111 M1129 87.5 V111 M1108.5 95 H1139 M1108.5 103.5 H1139" stroke="#e8f0f8" stroke-width="1"/><path d="M1111 92 h5 l-1 4 h-3 z M1120 96 l3 6 -2 4 z M1131 92 h5 l-1 4 -3 -1 z" fill="#5a7aa0"/><path d="M1132 105 L1144 121.5" stroke="#333" stroke-width="6.6" stroke-linecap="round"/>
<path d="M1132 105 L1144 121.5" stroke="#e3c95a" stroke-width="4" stroke-linecap="round"/>
<path d="M1132 105 L1137 110" stroke="#e6e6e6" stroke-width="4"/>
<path d="M1128.07 94.46 A7.6 7.6 0 1 1 1121.46 101.07 L1125.13 101.52 A3.4 3.4 0 1 0 1128.52 98.13 Z" fill="#ececec" stroke="#333" stroke-width="1.4" stroke-linejoin="round"/>
<circle cx="1142.8" cy="120.3" r="1.1" fill="#333"/><rect x="11.5" y="91" width="1" height="1" fill="#bbb"/><rect x="11.5" y="94" width="1" height="1" fill="#bbb"/><rect x="11.5" y="97" width="1" height="1" fill="#bbb"/><rect x="11.5" y="100" width="1" height="1" fill="#bbb"/><rect x="11.5" y="103" width="1" height="1" fill="#bbb"/><rect x="11.5" y="106" width="1" height="1" fill="#bbb"/><rect x="14.5" y="91" width="1" height="1" fill="#bbb"/><rect x="14.5" y="94" width="1" height="1" fill="#bbb"/><rect x="14.5" y="97" width="1" height="1" fill="#bbb"/><rect x="14.5" y="100" width="1" height="1" fill="#bbb"/><rect x="14.5" y="103" width="1" height="1" fill="#bbb"/><rect x="14.5" y="106" width="1" height="1" fill="#bbb"/><rect x="11.5" y="148" width="1" height="1" fill="#bbb"/><rect x="11.5" y="151" width="1" height="1" fill="#bbb"/><rect x="11.5" y="154" width="1" height="1" fill="#bbb"/><rect x="11.5" y="157" width="1" height="1" fill="#bbb"/><rect x="11.5" y="160" width="1" height="1" fill="#bbb"/><rect x="11.5" y="163" width="1" height="1" fill="#bbb"/><rect x="14.5" y="148" width="1" height="1" fill="#bbb"/><rect x="14.5" y="151" width="1" height="1" fill="#bbb"/><rect x="14.5" y="154" width="1" height="1" fill="#bbb"/><rect x="14.5" y="157" width="1" height="1" fill="#bbb"/><rect x="14.5" y="160" width="1" height="1" fill="#bbb"/><rect x="14.5" y="163" width="1" height="1" fill="#bbb"/><rect x="270.5" y="148" width="1" height="1" fill="#bbb"/><rect x="270.5" y="151" width="1" height="1" fill="#bbb"/><rect x="270.5" y="154" width="1" height="1" fill="#bbb"/><rect x="270.5" y="157" width="1" height="1" fill="#bbb"/><rect x="270.5" y="160" width="1" height="1" fill="#bbb"/><rect x="270.5" y="163" width="1" height="1" fill="#bbb"/><rect x="273.5" y="148" width="1" height="1" fill="#bbb"/><rect x="273.5" y="151" width="1" height="1" fill="#bbb"/><rect x="273.5" y="154" width="1" height="1" fill="#bbb"/><rect x="273.5" y="157" width="1" height="1" fill="#bbb"/><rect x="273.5" y="160" width="1" height="1" fill="#bbb"/><rect x="273.5" y="163" width="1" height="1" fill="#bbb"/><path d="M40.9 164.8 L27.4 177.3" stroke="#1e1e1e" stroke-width="6" stroke-linecap="butt"/>
<path d="M39.9 165.8 L28.2 176.5" stroke="#f0d238" stroke-width="3.2"/>
<circle cx="40.4" cy="165.3" r="2" fill="#111"/>
<defs><radialGradient id="lg48" cx="0.4" cy="0.35" r="0.7"><stop offset="0" stop-color="#ffffff"/><stop offset="1" stop-color="#d6d6d6"/></radialGradient></defs>
<circle cx="48.9" cy="156.8" r="12.5" fill="url(#lg48)" stroke="#5c5c5c" stroke-width="1.5"/><path d="M48.9 148.5 V165 M40.6 156.8 H57.2" stroke="#5b8fce" stroke-width="3.6" stroke-linecap="round"/><path d="M48.9 148.5 V165 M40.6 156.8 H57.2" stroke="#7aa6dc" stroke-width="1.2" stroke-linecap="round"/><path d="M87.0 164.8 L73.5 177.3" stroke="#1e1e1e" stroke-width="6" stroke-linecap="butt"/>
<path d="M86.0 165.8 L74.3 176.5" stroke="#f0d238" stroke-width="3.2"/>
<circle cx="86.5" cy="165.3" r="2" fill="#111"/>
<defs><radialGradient id="lg95" cx="0.4" cy="0.35" r="0.7"><stop offset="0" stop-color="#ffffff"/><stop offset="1" stop-color="#d6d6d6"/></radialGradient></defs>
<circle cx="95" cy="156.8" r="12.5" fill="url(#lg95)" stroke="#5c5c5c" stroke-width="1.5"/><path d="M86.6 156.8 H103.4" stroke="#5b8fce" stroke-width="3.6" stroke-linecap="round"/><rect x="122.3" y="145.6" width="16" height="20.5" fill="#e2e2e2" stroke="#8c8c8c" stroke-width="1.2"/><path d="M133.8 164.8 L120.30000000000001 177.3" stroke="#1e1e1e" stroke-width="6" stroke-linecap="butt"/>
<path d="M132.8 165.8 L121.10000000000001 176.5" stroke="#f0d238" stroke-width="3.2"/>
<circle cx="133.3" cy="165.3" r="2" fill="#111"/>
<defs><radialGradient id="lg141" cx="0.4" cy="0.35" r="0.7"><stop offset="0" stop-color="#ffffff"/><stop offset="1" stop-color="#d6d6d6"/></radialGradient></defs>
<circle cx="141.8" cy="156.8" r="12.5" fill="url(#lg141)" stroke="#5c5c5c" stroke-width="1.5"/><text x="141.8" y="162.6" text-anchor="middle" font-family="Liberation Sans" font-weight="bold" font-size="14.5" fill="#1e1e1e" letter-spacing="-0.8">1:1</text><path d="M179.584 165.816 L166.3 178.1" stroke="#1e1e1e" stroke-width="6" stroke-linecap="butt"/>
<path d="M178.584 166.816 L167.10000000000002 177.29999999999998" stroke="#f0d238" stroke-width="3.2"/>
<circle cx="179.084" cy="166.316" r="2" fill="#111"/>
<defs><radialGradient id="lg187" cx="0.4" cy="0.35" r="0.7"><stop offset="0" stop-color="#ffffff"/><stop offset="1" stop-color="#d6d6d6"/></radialGradient></defs>
<circle cx="187.8" cy="157.6" r="12.8" fill="url(#lg187)" stroke="#5c5c5c" stroke-width="1.5"/><path d="M170.2 141.6 H182 L178 145.5 L183.5 151 L180 154.5 L174.5 149 L170.2 153 Z M203.2 141.6 H191.5 L195.5 145.5 L190 151 L193.5 154.5 L199 149 L203.2 153 Z M203.2 174 H191.5 L195.5 170 L190 164.5 L193.5 161 L199 166.5 L203.2 162.5 Z" fill="#5b8fce" stroke="#3d6fa8" stroke-width="0.8"/><g transform="translate(213.5,143.8) scale(1.0)"><path d="M3 14 Q5 2 18 2.5 Q25 3 29 8 L33 4 V17 H20 L24.5 12.5 Q21.5 8.5 17 8.7 Q9.5 9.5 8.5 15 Z" fill="#4a86cc" stroke="#2e68ae" stroke-width="0.8"/>
<path d="M30 20 Q28 32 15 31.5 Q8 31 4 26 L0 30 V17 H13 L8.5 21.5 Q11.5 25.5 16 25.3 Q23.5 24.5 24.5 19 Z" fill="#4a86cc" stroke="#2e68ae" stroke-width="0.8"/>
<path d="M6 12 Q9 5 18 5" fill="none" stroke="#9cc4ee" stroke-width="1.4"/><path d="M27 22 Q24 29 15 29" fill="none" stroke="#9cc4ee" stroke-width="1.4"/></g><rect x="286.6" y="146.9" width="20.3" height="18.4" fill="#cde6f8" stroke="#3f6a88" stroke-width="1.4"/><path d="M300 164 V155 A8.2 8.2 0 0 1 316.4 155 V164" fill="none" stroke="#6e6e6e" stroke-width="3.4"/><path d="M300 164 V155 A8.2 8.2 0 0 1 316.4 155 V164" fill="none" stroke="#dedede" stroke-width="1.5"/><rect x="296.5" y="163.5" width="23.2" height="14" rx="2" fill="#f0d81c" stroke="#c9a300" stroke-width="1.4"/><rect x="333.4" y="151.4" width="14" height="18.6" fill="#cde6f8" stroke="#3f6a88" stroke-width="1.4"/><circle cx="352.8" cy="154.8" r="9.4" fill="#cde6f8" stroke="#3f6a88" stroke-width="1.4"/><path d="M349.5 157 A6.5 6.5 0 1 1 363 158 V164" fill="none" stroke="#6e6e6e" stroke-width="3.4"/><path d="M349.5 157 A6.5 6.5 0 1 1 363 158 V164" fill="none" stroke="#dedede" stroke-width="1.5"/><rect x="343.2" y="163.5" width="23" height="14" rx="2" fill="#f0d81c" stroke="#c9a300" stroke-width="1.4"/><rect x="383.3" y="158.2" width="19.8" height="15" fill="#cde6f8" stroke="#3f6a88" stroke-width="1.4"/><circle cx="399.3" cy="156.7" r="9.9" fill="#cde6f8" stroke="#3f6a88" stroke-width="1.4"/><rect x="379.4" y="144.9" width="3.8" height="3.4" fill="#000"/><rect x="379.4" y="173.7" width="3.8" height="3.4" fill="#000"/><rect x="407.6" y="144.9" width="3.8" height="3.4" fill="#000"/><rect x="407.6" y="173.7" width="3.8" height="3.4" fill="#000"/><rect x="429.4" y="158.2" width="20.2" height="15" fill="#f2f0a6" stroke="#8c8c8c" stroke-width="1.4"/><circle cx="445.4" cy="156.7" r="9.9" fill="#cde6f8" stroke="#3f6a88" stroke-width="1.4"/><rect x="425.4" y="154.8" width="3.8" height="3.4" fill="#000"/><rect x="454.4" y="144.9" width="3.8" height="3.4" fill="#000"/><rect x="454.4" y="164.8" width="3.8" height="3.4" fill="#000"/><rect x="435.5" y="164.8" width="3.8" height="3.4" fill="#000"/><rect x="425.4" y="173.7" width="3.8" height="3.4" fill="#000"/><rect x="447.4" y="173.7" width="3.8" height="3.4" fill="#000"/><rect x="435.5" y="144.9" width="3.8" height="3.4" fill="#000"/><rect x="472.3" y="158.2" width="25.4" height="18.3" fill="#cde6f8" stroke="#7ea5c2" stroke-width="1.3"/><rect x="478.8" y="145" width="24.9" height="18.3" fill="#f2f0a6" stroke="#8c8c8c" stroke-width="1.3"/><path d="M495.8 171.3 H507.6 L501.7 177.8 Z" fill="#505050"/><rect x="518.6" y="142.9" width="1.6" height="35" fill="#222"/><rect x="520.2" y="145.4" width="15.5" height="13.1" fill="#c9f7c3" stroke="#6cb864" stroke-width="1.1"/><rect x="520.2" y="161.6" width="21.8" height="14.9" fill="#cde6f8" stroke="#7ea5c2" stroke-width="1.3"/><path d="M542.4 171 H553.8 L548.1 177.7 Z" fill="#505050"/><rect x="563.5" y="153.2" width="7.3" height="16.5" fill="#c9f7c3" stroke="#6cb864" stroke-width="1.1"/><rect x="577.8" y="153.2" width="10.8" height="23.3" fill="#cde6f8" stroke="#7ea5c2" stroke-width="1.3"/><rect x="591.8" y="153.2" width="7.6" height="13.5" fill="#c9f7c3" stroke="#6cb864" stroke-width="1.1"/><path d="M564.2 145 V157.5 M578.3 145 V157.5 M592.7 145 V157.5" stroke="#222" stroke-width="1.5"/><path d="M589 171 H600.4 L594.7 177.7 Z" fill="#505050"/><rect x="611.6" y="145.4" width="18.9" height="31" fill="#cde6f8" stroke="#7ea5c2" stroke-width="1.3"/><path d="M611.5 160.8 H617.5 M614 157 L617.8 160.8 L614 164.6 M630.5 160.8 H624.5 M628 157 L624.2 160.8 L628 164.6" fill="none" stroke="#2a2a2a" stroke-width="1.6"/><rect x="634.2" y="145.4" width="8.5" height="31" fill="#f2f0a6" stroke="#8c8c8c" stroke-width="1.2"/><path d="M635.6 171 H647 L641.3 177.7 Z" fill="#3a3a2a" opacity="0.85"/><rect x="24.0" y="200.0" width="1" height="1" fill="#bbb"/><rect x="24.0" y="202.5" width="1" height="1" fill="#bbb"/><rect x="26.6" y="200.0" width="1" height="1" fill="#bbb"/><rect x="26.6" y="202.5" width="1" height="1" fill="#bbb"/><rect x="29.2" y="200.0" width="1" height="1" fill="#bbb"/><rect x="29.2" y="202.5" width="1" height="1" fill="#bbb"/><rect x="31.8" y="200.0" width="1" height="1" fill="#bbb"/><rect x="31.8" y="202.5" width="1" height="1" fill="#bbb"/><rect x="34.4" y="200.0" width="1" height="1" fill="#bbb"/><rect x="34.4" y="202.5" width="1" height="1" fill="#bbb"/><rect x="37.0" y="200.0" width="1" height="1" fill="#bbb"/><rect x="37.0" y="202.5" width="1" height="1" fill="#bbb"/><path d="M24 249 Q20 241 17.5 234 Q16 229.5 19 229 Q21.5 229 24 234 V217 Q24 213.5 26.5 213.5 Q29 213.5 29 217 V227 V215 Q29 212 31.5 212 Q34 212 34 215 V227 V217 Q34 214 36.5 214 Q39 214 39 217 V228 V221 Q39 218.5 41.5 218.5 Q44 218.5 44 221 V236 Q44 243 41 249 Z" fill="#fff" stroke="#111" stroke-width="1.8" stroke-linejoin="round"/><rect x="12.5" y="260.5" width="16" height="21.5" rx="2" fill="none" stroke="#111" stroke-width="1.8" stroke-dasharray="3,2"/><path d="M23 283 L14 295.5" stroke="#1e1e1e" stroke-width="5.5" stroke-linecap="square"/><path d="M22.5 283.5 L14.2 295" stroke="#f0d238" stroke-width="2.8"/><circle cx="35.7" cy="272.6" r="13.2" fill="#e2e2e2" stroke="#666" stroke-width="1.5"/><path d="M28 268 Q30 262 36 261" fill="none" stroke="#fff" stroke-width="2"/><circle cx="23.5" cy="282.5" r="2" fill="#111"/><path d="M17 310.8 H40 M40 310.8 V333 M17 333 H40 M17 310.8 V333" stroke="#444" stroke-width="1.3" stroke-dasharray="1.5,2.5"/><rect x="14.7" y="308.5" width="4.6" height="4.6" fill="#fff" stroke="#666" stroke-width="1.2"/><rect x="14.7" y="330.3" width="4.6" height="4.6" fill="#fff" stroke="#666" stroke-width="1.2"/><rect x="37.6" y="308.5" width="4.6" height="4.6" fill="#fff" stroke="#666" stroke-width="1.2"/><rect x="37.6" y="330.3" width="4.6" height="4.6" fill="#fff" stroke="#666" stroke-width="1.2"/><path d="M19.5 308.2 L22.8 336 L29.5 329.5 L34.5 341.5 L40.5 338.5 L35.8 327 L43 326.5 Z" fill="#fff" stroke="#111" stroke-width="1.8" stroke-linejoin="round"/><rect x="8.5" y="347.5" width="44" height="43.5" rx="3" fill="#dedede" stroke="#c4c4c4" stroke-width="1"/><defs><linearGradient id="sg14351" x1="0" x2="1"><stop offset="0" stop-color="#d8d8d8"/><stop offset="0.4" stop-color="#f2f2f2"/><stop offset="1" stop-color="#dcdcdc"/></linearGradient></defs>
<rect x="21.364" y="353.352" width="23.712000000000003" height="30.24000000000002" fill="url(#sg14351)" stroke="#8e8e8e" stroke-width="1.3"/>
<path d="M21.364 353.352 Q21.364 351 18.244 351 Q14.5 351 14.5 354.36 V381.24 Q14.5 384.6 19.18 384.6 H30.1" fill="#ececec" stroke="#8e8e8e" stroke-width="1.3"/>
<path d="M14.5 380.56800000000004 Q16.06 377.208 21.364 377.88" fill="none" stroke="#8e8e8e" stroke-width="1.1"/><rect x="27" y="366" width="13" height="13" fill="#f4f4f4"/><path d="M27 372.5 H40 M33.5 366 V379" stroke="#dcdcdc" stroke-width="1"/><path d="M35.2 355 L43 363.4 H38.5 V368.4 H31.8 V363.4 H27.3 Z" fill="#5b8fce" stroke="#34639a" stroke-width="0.9" stroke-linejoin="round"/><path d="M21.7 374 L26.8 366.2 V371.2 H29.6 V376.8 H26.8 V381.8 Z" fill="#5b8fce" stroke="#34639a" stroke-width="0.9" stroke-linejoin="round"/><rect x="40.5" y="371.2" width="4.7" height="5.6" fill="#5b8fce" stroke="#34639a" stroke-width="0.7"/><rect x="32.3" y="379" width="5.6" height="5" fill="#5b8fce" stroke="#34639a" stroke-width="0.7"/><path d="M24.5 399.7 L44 409.2 M24.5 399.7 L16.7 427.6" stroke="#111" stroke-width="1.8"/><path d="M16.7 427.6 L30 422" stroke="#111" stroke-width="1.6" stroke-dasharray="2,2"/><path d="M29 413 L44.5 431" stroke="#b87a10" stroke-width="4"/><path d="M28 430.5 L40 417" stroke="#e8c820" stroke-width="4" stroke-linecap="round"/><path d="M27 417 Q33 408 44 411 L45 414 Q36 414 31 421 Z" fill="#cfcfcf" stroke="#777" stroke-width="1"/><circle cx="24.5" cy="399.7" r="4.4" fill="#1f7ae8" stroke="#155fc0" stroke-width="0.6"/><circle cx="44" cy="409.2" r="4.4" fill="#1f7ae8" stroke="#155fc0" stroke-width="0.6"/><circle cx="16.7" cy="427.6" r="4.4" fill="#1f7ae8" stroke="#155fc0" stroke-width="0.6"/><defs><linearGradient id="sg14442" x1="0" x2="1"><stop offset="0" stop-color="#d8d8d8"/><stop offset="0.4" stop-color="#f2f2f2"/><stop offset="1" stop-color="#dcdcdc"/></linearGradient></defs>
<rect x="21.496" y="445.003" width="24.168" height="29.61000000000003" fill="url(#sg14442)" stroke="#8e8e8e" stroke-width="1.3"/>
<path d="M21.496 445.003 Q21.496 442.7 18.316 442.7 Q14.5 442.7 14.5 445.99 V472.31 Q14.5 475.6 19.27 475.6 H30.4" fill="#ececec" stroke="#8e8e8e" stroke-width="1.3"/>
<path d="M14.5 471.65200000000004 Q16.09 468.362 21.496 469.02000000000004" fill="none" stroke="#8e8e8e" stroke-width="1.1"/><rect x="35" y="464.5" width="15" height="15" rx="3" fill="#5b9a58" stroke="#3f7a3c" stroke-width="0.8"/>
<path d="M42.5 467.5 V476.5 M38 472.0 H47" stroke="#fff" stroke-width="2.8"/><path d="M12.5 512 L22 494 L46 493 L44 514 Z" fill="#e0e0e0" stroke="#9a9a9a" stroke-width="1.2"/><path d="M17 503 L45 503 M14.5 508 L44.5 509 M22 494 L27 514 M30 493.5 L34 514 M38 493 L40 514" stroke="#b0b0b0" stroke-width="0.9" fill="none"/><rect x="35.2" y="510.5" width="15" height="15" rx="3" fill="#5b9a58" stroke="#3f7a3c" stroke-width="0.8"/>
<path d="M42.7 513.5 V522.5 M38.2 518.0 H47.2" stroke="#fff" stroke-width="2.8"/><rect x="14.5" y="540.5" width="31.5" height="21.5" fill="#4ea6e6" stroke="#8a8a8a" stroke-width="1.4"/><path d="M15.2 561.3 V553 L25 547 L45.3 555 V561.3 Z" fill="#c8b04a"/><rect x="35.2" y="556.3" width="15" height="15" rx="3" fill="#5b9a58" stroke="#3f7a3c" stroke-width="0.8"/>
<path d="M42.7 559.3 V568.3 M38.2 563.8 H47.2" stroke="#fff" stroke-width="2.8"/><rect x="14.5" y="586" width="31.5" height="21.5" fill="#f0f0f0" stroke="#8a8a8a" stroke-width="1.4"/><text x="30" y="604" text-anchor="middle" font-family="Liberation Serif" font-size="19" fill="#111">T</text><rect x="35.2" y="602" width="15" height="15" rx="3" fill="#5b9a58" stroke="#3f7a3c" stroke-width="0.8"/>
<path d="M42.7 605 V614 M38.2 609.5 H47.2" stroke="#fff" stroke-width="2.8"/><rect x="16.3" y="627.5" width="7" height="7" fill="#ffd21a" stroke="#e88a10" stroke-width="1"/><rect x="16.3" y="637.5" width="7" height="7" fill="#e83a10" stroke="#a82a08" stroke-width="1"/><rect x="16.3" y="647" width="7" height="7" fill="#10b050" stroke="#0a5a2a" stroke-width="1.2"/><path d="M25.5 634 H35 M25.5 644 H39.5 M25.5 653.3 H31" stroke="#a0a0a0" stroke-width="2.5"/><rect x="35.2" y="647" width="15" height="15" rx="3" fill="#5b9a58" stroke="#3f7a3c" stroke-width="0.8"/>
<path d="M42.7 650 V659 M38.2 654.5 H47.2" stroke="#fff" stroke-width="2.8"/><rect x="13.5" y="684" width="34.5" height="5.5" fill="#222"/><rect x="21.5" y="685.5" width="6.5" height="2.5" fill="#fff"/><rect x="34.5" y="685.5" width="6.5" height="2.5" fill="#fff"/><rect x="16" y="685.5" width="5" height="2.5" fill="#777"/><rect x="28.5" y="685.5" width="5.5" height="2.5" fill="#777"/><rect x="35.2" y="692.8" width="15" height="15" rx="3" fill="#5b9a58" stroke="#3f7a3c" stroke-width="0.8"/>
<path d="M42.7 695.8 V704.8 M38.2 700.3 H47.2" stroke="#fff" stroke-width="2.8"/><path d="M30 716.7 L18.5 751 L29 744 L38.5 750 Z" fill="#4f7fbf" stroke="#2f5a90" stroke-width="1"/><path d="M30 716.7 L29 744 L38.5 750 Z" fill="#3a68a8"/><text x="28.5" y="738" text-anchor="middle" font-family="Liberation Sans" font-weight="bold" font-size="11" fill="#fff">N</text><rect x="34.2" y="737" width="15" height="15" rx="3" fill="#5b9a58" stroke="#3f7a3c" stroke-width="0.8"/>
<path d="M41.7 740 V749 M37.2 744.5 H46.2" stroke="#fff" stroke-width="2.8"/><rect x="14.3" y="777.2" width="21.8" height="16.4" fill="#cde6f8" stroke="#7ea5c2" stroke-width="1.2"/><circle cx="36.3" cy="780.5" r="9.7" fill="#f4a8a8" stroke="#d06060" stroke-width="1.1"/><path d="M29 762.5 L18.5 782.3 H39.5 Z" fill="#c9f7c3" stroke="#5a9a50" stroke-width="1.2"/><rect x="34.2" y="784.8" width="15" height="15" rx="3" fill="#5b9a58" stroke="#3f7a3c" stroke-width="0.8"/>
<path d="M41.7 787.8 V796.8 M37.2 792.3 H46.2" stroke="#fff" stroke-width="2.8"/><path d="M38 792 H49 L43.5 798.5 Z" fill="#333"/><path d="M17.5 837 L43 812.5" stroke="#222" stroke-width="1.7"/><rect x="14" y="835" width="5" height="5" fill="#222"/><path d="M45.5 810 L33.5 813.5 L42 822 Z" fill="#fff" stroke="#222" stroke-width="1.6" stroke-linejoin="round"/><rect x="34.2" y="830" width="15" height="15" rx="3" fill="#5b9a58" stroke="#3f7a3c" stroke-width="0.8"/>
<path d="M41.7 833 V842 M37.2 837.5 H46.2" stroke="#fff" stroke-width="2.8"/><path d="M25.1 856.2 L44.1 866.3 M25.1 856.2 L16.6 883" stroke="#111" stroke-width="1.8"/><path d="M16.6 883 L44.1 866.3" stroke="#111" stroke-width="1.6" stroke-dasharray="2,2"/><circle cx="25.1" cy="856.2" r="4" fill="#1f7ae8" stroke="#155fc0" stroke-width="0.6"/><circle cx="44.1" cy="866.3" r="4" fill="#1f7ae8" stroke="#155fc0" stroke-width="0.6"/><circle cx="16.6" cy="883" r="4" fill="#1f7ae8" stroke="#155fc0" stroke-width="0.6"/><rect x="34.2" y="876" width="15" height="15" rx="3" fill="#5b9a58" stroke="#3f7a3c" stroke-width="0.8"/>
<path d="M41.7 879 V888 M37.2 883.5 H46.2" stroke="#fff" stroke-width="2.8"/><path d="M38 883 H49 L43.5 889.5 Z" fill="#333"/><rect x="14.3" y="901.3" width="31.5" height="30.5" fill="#f0f0f0" stroke="#8a8a8a" stroke-width="1.4"/><path d="M17.5 907 H22.5 M17.5 912 H22.5 M17.5 917 H30 M17.5 922 H30 M17.5 927 H30" stroke="#5b8fce" stroke-width="2.5"/><path d="M28.5 905.5 L24.5 909.8 L28.5 914 M39.5 905.5 L43.5 909.8 L39.5 914 M35.5 904.5 L32.5 915" fill="none" stroke="#111" stroke-width="1.6"/><rect x="34.2" y="921.5" width="15" height="15" rx="3" fill="#5b9a58" stroke="#3f7a3c" stroke-width="0.8"/>
<path d="M41.7 924.5 V933.5 M37.2 929.0 H46.2" stroke="#fff" stroke-width="2.8"/><rect x="14.3" y="947" width="31.5" height="30.5" fill="#eef2f8" stroke="#6a9ad0" stroke-width="1.4"/><rect x="15" y="948" width="30" height="6" fill="#8ab0de"/><path d="M17 953 H22 M25 951 H40" stroke="#5b8fce" stroke-width="2"/><path d="M17 959 H23 M26 959 H42 M17 964 H23 M26 964 H42 M17 969 H23 M26 969 H42 M17 974 H23 M26 974 H35" stroke="#7aa0d0" stroke-width="1.5"/><rect x="34.2" y="966.5" width="15" height="15" rx="3" fill="#5b9a58" stroke="#3f7a3c" stroke-width="0.8"/>
<path d="M41.7 969.5 V978.5 M37.2 974.0 H46.2" stroke="#fff" stroke-width="2.8"/><g transform="translate(1521.5,469.3) scale(0.71)"><path d="M3 14 Q5 2 18 2.5 Q25 3 29 8 L33 4 V17 H20 L24.5 12.5 Q21.5 8.5 17 8.7 Q9.5 9.5 8.5 15 Z" fill="#4a86cc" stroke="#2e68ae" stroke-width="0.8"/>
<path d="M30 20 Q28 32 15 31.5 Q8 31 4 26 L0 30 V17 H13 L8.5 21.5 Q11.5 25.5 16 25.3 Q23.5 24.5 24.5 19 Z" fill="#4a86cc" stroke="#2e68ae" stroke-width="0.8"/>
<path d="M6 12 Q9 5 18 5" fill="none" stroke="#9cc4ee" stroke-width="1.4"/><path d="M27 22 Q24 29 15 29" fill="none" stroke="#9cc4ee" stroke-width="1.4"/></g><rect x="1555.5" y="471.5" width="1" height="21" fill="#d8d8d8"/><rect x="1634.5" y="471.5" width="1" height="21" fill="#d8d8d8"/><rect x="1712.7" y="471.5" width="1" height="21" fill="#d8d8d8"/><rect x="1791.8" y="471.5" width="1" height="21" fill="#d8d8d8"/><rect x="1569" y="472" width="19.700000000000045" height="20.5" rx="1.5" fill="#e8e8e8" stroke="#8e8e8e" stroke-width="1.2"/>
<path d="M1572 472 V489.5 M1567 489.5 Q1567 492.5 1570 492.5 H1588.7" fill="none" stroke="#8e8e8e" stroke-width="1.1"/><path d="M1569 472 Q1567 472 1567 474 V489.5" fill="none" stroke="#8e8e8e" stroke-width="1.1"/><path d="M1572 477 H1587 V490 H1572 Z M1587 477 L1581 483 M1587 490 L1581 484" fill="none" stroke="#333" stroke-width="1"/><path d="M1565.5 477 Q1566 469 1573 469 Q1580 469 1580 477 V481 H1584 L1576.5 488.5 L1569 481 H1573 V477 Q1573 474.5 1570.5 474.5 Q1568 474.5 1567.5 477 Z" fill="#e87a30"/><rect x="1602.8" y="472" width="19.600000000000136" height="20.5" rx="1.5" fill="#e8e8e8" stroke="#8e8e8e" stroke-width="1.2"/>
<path d="M1605.8 472 V489.5 M1600.8 489.5 Q1600.8 492.5 1603.8 492.5 H1622.4" fill="none" stroke="#8e8e8e" stroke-width="1.1"/><path d="M1602.8 472 Q1600.8 472 1600.8 474 V489.5" fill="none" stroke="#8e8e8e" stroke-width="1.1"/><path d="M1606 477 H1621 V490 H1606 Z M1621 490 L1615 484" fill="none" stroke="#333" stroke-width="1"/><path d="M1607.5 484.5 Q1607.5 474.5 1616 474.5 V470 L1624 477.5 L1616 485 V480.5 Q1611 480.5 1610 484.5 Z" fill="#e87a30"/><rect x="1647.6" y="472" width="19.600000000000136" height="20.5" rx="1.5" fill="#e8e8e8" stroke="#8e8e8e" stroke-width="1.2"/>
<path d="M1650.6 472 V489.5 M1645.6 489.5 Q1645.6 492.5 1648.6 492.5 H1667.2" fill="none" stroke="#8e8e8e" stroke-width="1.1"/><path d="M1647.6 472 Q1645.6 472 1645.6 474 V489.5" fill="none" stroke="#8e8e8e" stroke-width="1.1"/><text x="1656" y="491" font-family="Liberation Sans" font-size="8.5" fill="#333">:23</text><path d="M1643.5 477 Q1644 469 1651 469 Q1658 469 1658 477 V481 H1662 L1654.5 488.5 L1647 481 H1651 V477 Q1651 474.5 1648.5 474.5 Q1646 474.5 1645.5 477 Z" fill="#e87a30"/><rect x="1681.3" y="472" width="19.600000000000136" height="20.5" rx="1.5" fill="#e8e8e8" stroke="#8e8e8e" stroke-width="1.2"/>
<path d="M1684.3 472 V489.5 M1679.3 489.5 Q1679.3 492.5 1682.3 492.5 H1700.9" fill="none" stroke="#8e8e8e" stroke-width="1.1"/><path d="M1681.3 472 Q1679.3 472 1679.3 474 V489.5" fill="none" stroke="#8e8e8e" stroke-width="1.1"/><text x="1688.5" y="491" font-family="Liberation Sans" font-size="8.5" fill="#333">:23</text><path d="M1686 484.5 Q1686 474.5 1694.5 474.5 V470 L1702.5 477.5 L1694.5 485 V480.5 Q1689.5 480.5 1688.5 484.5 Z" fill="#e87a30"/><rect x="1726" y="471.5" width="19.59999999999991" height="20.5" rx="1.5" fill="#e8e8e8" stroke="#8e8e8e" stroke-width="1.2"/>
<path d="M1729 471.5 V489 M1724 489 Q1724 492 1727 492 H1745.6" fill="none" stroke="#8e8e8e" stroke-width="1.1"/><path d="M1726 471.5 Q1724 471.5 1724 473.5 V489" fill="none" stroke="#8e8e8e" stroke-width="1.1"/><path d="M1736 470.5 H1741 V481 L1738.5 484 L1736 481 Z" fill="#6b9ad4" stroke="#3d6fa8" stroke-width="0.8"/><path d="M1736 485.5 H1748 L1742 492 Z" fill="#444"/><rect x="1760" y="471.5" width="19.200000000000045" height="20.5" rx="1.5" fill="#e8e8e8" stroke="#8e8e8e" stroke-width="1.2"/>
<path d="M1763 471.5 V489 M1758 489 Q1758 492 1761 492 H1779.2" fill="none" stroke="#8e8e8e" stroke-width="1.1"/><path d="M1760 471.5 Q1758 471.5 1758 473.5 V489" fill="none" stroke="#8e8e8e" stroke-width="1.1"/><path d="M1771.5 473 L1776.5 478 H1774 V482 H1769 V478 H1766.5 Z M1763 479 V489 L1767 485 V483 H1763" fill="#5b8fce" stroke="#3d6fa8" stroke-width="0.6"/><rect x="1776" y="483" width="3" height="3.5" fill="#5b8fce"/><rect x="1770" y="488.5" width="3.5" height="3.5" fill="#5b8fce"/><path d="M1802.5 481.7 L1806.5 476 H1824 V487.5 H1806.5 Z" fill="#f9ea7a" stroke="#c9a000" stroke-width="1.4" stroke-linejoin="round"/><text x="1815.5" y="485.3" text-anchor="middle" font-family="Liberation Sans" font-weight="bold" font-size="8.5" fill="#111">abc</text></svg>
</body></html>
